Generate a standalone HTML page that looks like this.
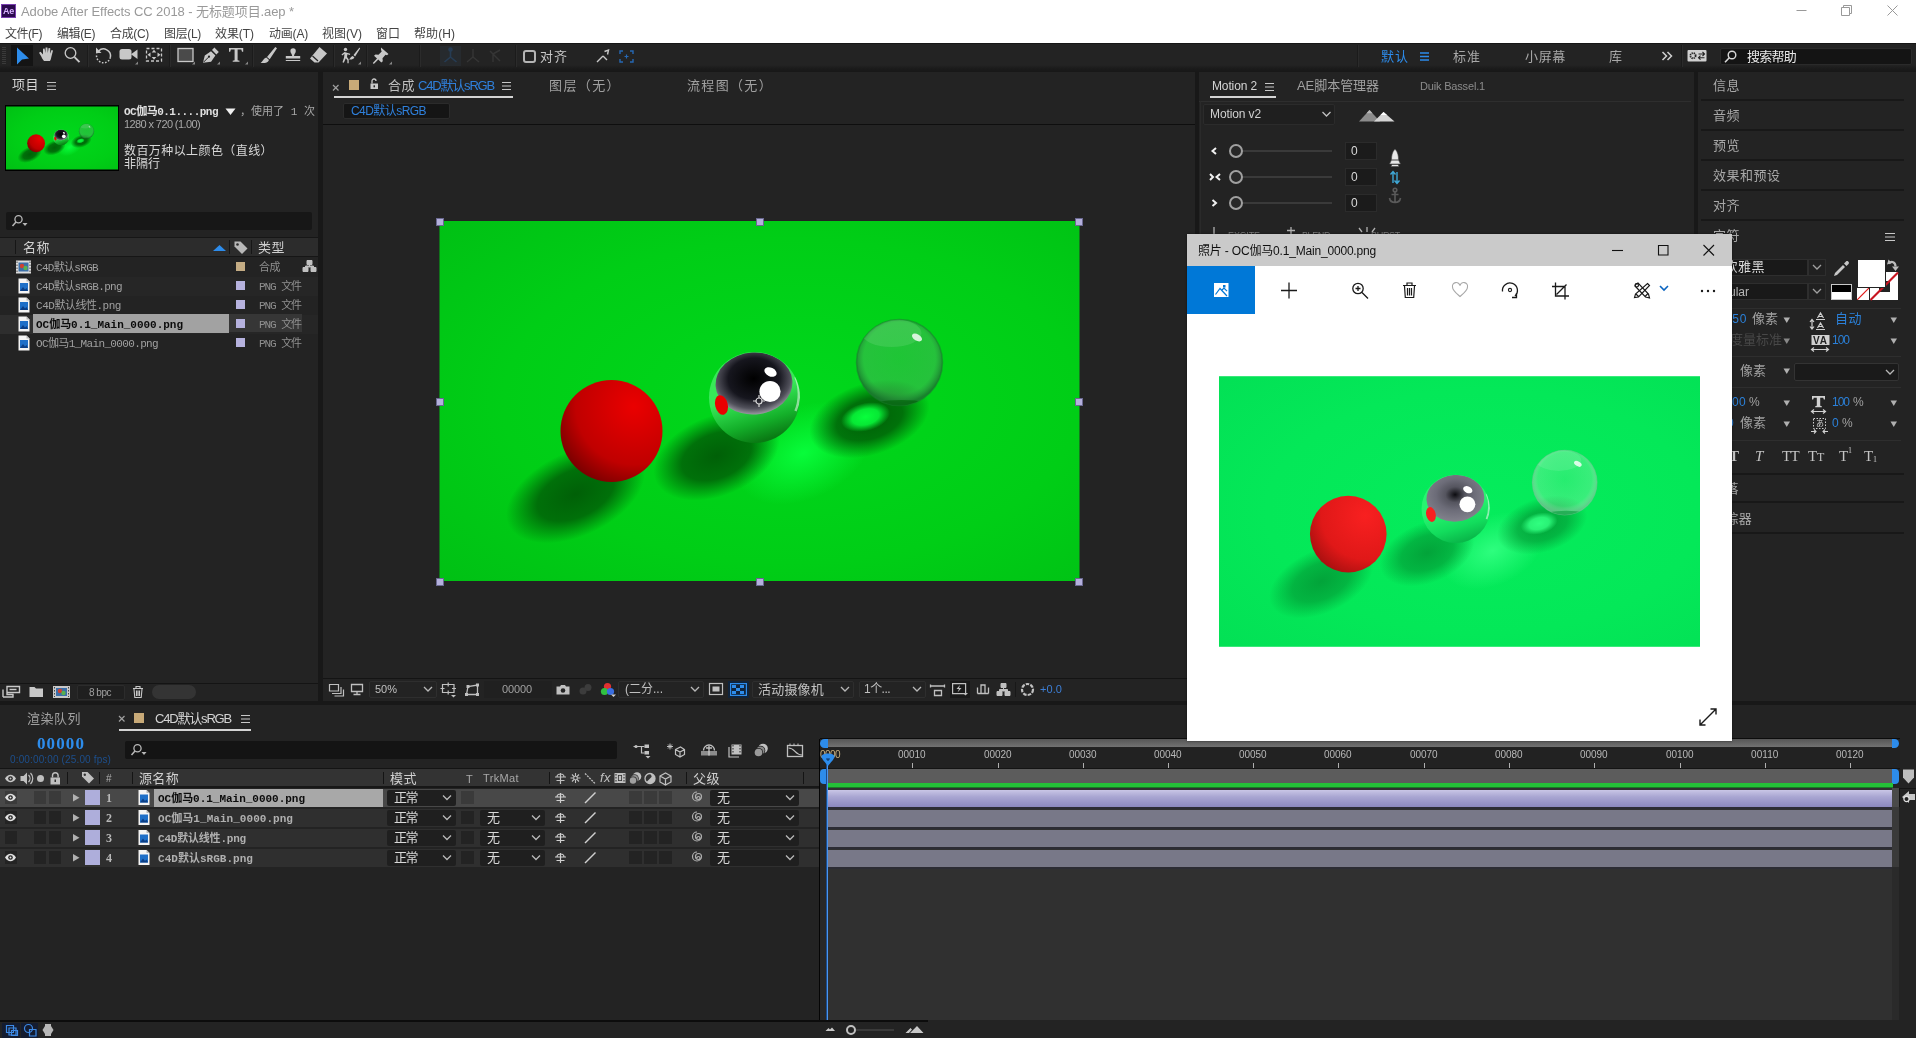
<!DOCTYPE html><html lang="zh"><head><meta charset="utf-8"><title>Adobe After Effects CC 2018</title><style>
html,body{margin:0;padding:0;background:#181818;}
body{width:1916px;height:1038px;overflow:hidden;position:relative;font-family:"Liberation Sans","Noto Sans CJK SC",sans-serif;}
#root{position:absolute;left:0;top:0;width:1916px;height:1038px;overflow:hidden;will-change:transform;}
#root div,#root span,#root svg{position:absolute;box-sizing:border-box;}
.t{white-space:pre;display:block;}
.m{font-family:"Liberation Mono","Noto Sans CJK SC",monospace;}
.s{font-family:"Liberation Serif","Noto Serif CJK SC",serif;}
.b{font-weight:bold;}
#t1{letter-spacing:-0.258px}#t2{letter-spacing:-0.085px}#t3{letter-spacing:-0.466px}#t4{letter-spacing:-0.4px}#t5{letter-spacing:-0.334px}#t6{letter-spacing:-0.334px}#t7{letter-spacing:-0.066px}#t8{letter-spacing:-0.2px}#t10{letter-spacing:-0.008px}#t11{letter-spacing:0.066px}#t12{letter-spacing:0.992px}#t13{letter-spacing:0.992px}#t14{letter-spacing:0.992px}#t15{letter-spacing:0.661px}#t16{letter-spacing:0.984px}#t17{letter-spacing:-0.754px}#t18{letter-spacing:0.492px}#t19{letter-spacing:-0.516px}#t20{letter-spacing:0.023px}#t21{letter-spacing:-0.602px}#t22{letter-spacing:0.415px}#t23{letter-spacing:-0.005px}#t24{letter-spacing:0.492px}#t25{letter-spacing:0.492px}#t26{letter-spacing:-0.691px}#t27{letter-spacing:-0.5px}#t28{letter-spacing:-0.663px}#t29{letter-spacing:-1.068px}#t30{letter-spacing:-0.474px}#t31{letter-spacing:-1.068px}#t32{letter-spacing:-0.02px}#t33{letter-spacing:-1.068px}#t34{letter-spacing:-0.643px}#t35{letter-spacing:-1.068px}#t36{letter-spacing:-0.494px}#t37{letter-spacing:0.492px}#t38{letter-spacing:-1.188px}#t39{letter-spacing:1.397px}#t40{letter-spacing:1.331px}#t41{letter-spacing:-0.557px}#t42{letter-spacing:-0.01px}#t43{letter-spacing:-0.119px}#t45{letter-spacing:0.197px}#t46{letter-spacing:-0.537px}#t47{letter-spacing:0.07px}#t48{letter-spacing:-0.129px}#t49{letter-spacing:-0.049px}#t50{letter-spacing:-0.174px}#t51{letter-spacing:-0.115px}#t52{letter-spacing:-0.688px}#t53{letter-spacing:-0.688px}#t54{letter-spacing:-0.688px}#t55{letter-spacing:-0.086px}#t56{letter-spacing:-0.403px}#t57{letter-spacing:-0.303px}#t58{letter-spacing:0.492px}#t59{letter-spacing:0.492px}#t60{letter-spacing:0.492px}#t61{letter-spacing:0.497px}#t62{letter-spacing:0.492px}#t63{letter-spacing:0.492px}#t64{letter-spacing:0.496px}#t66{letter-spacing:0.656px}#t67{letter-spacing:-0.008px}#t68{letter-spacing:0.492px}#t70{letter-spacing:-1.01px}#t71{letter-spacing:-0.008px}#t72{letter-spacing:0.323px}#t73{letter-spacing:-1.672px}#t74{letter-spacing:-1.01px}#t75{letter-spacing:-1.672px}#t76{letter-spacing:0.312px}#t77{letter-spacing:-0.008px}#t78{letter-spacing:-0.688px}#t79{letter-spacing:-1.672px}#t80{letter-spacing:0.922px}#t82{letter-spacing:0.984px}#t83{letter-spacing:1.656px}#t84{letter-spacing:-0.664px}#t85{letter-spacing:-0.172px}#t86{letter-spacing:0.656px}#t87{letter-spacing:-0.172px}#t89{letter-spacing:-0.172px}#t91{letter-spacing:0.492px}#t92{letter-spacing:0.328px}#t93{letter-spacing:0.496px}#t94{letter-spacing:-1.188px}#t95{letter-spacing:1.1px}#t96{letter-spacing:0.143px}#t97{letter-spacing:0.328px}#t98{letter-spacing:0.438px}#t99{letter-spacing:0.492px}#t100{letter-spacing:-0.734px}#t101{letter-spacing:0.365px}#t102{letter-spacing:0.438px}#t103{letter-spacing:0.492px}#t105{letter-spacing:-0.02px}#t106{letter-spacing:-1.508px}#t107{letter-spacing:-1.016px}#t109{letter-spacing:0.041px}#t110{letter-spacing:-1.508px}#t111{letter-spacing:-1.016px}#t112{letter-spacing:-1.016px}#t114{letter-spacing:-0.202px}#t115{letter-spacing:-1.508px}#t116{letter-spacing:-1.016px}#t117{letter-spacing:-1.016px}#t119{letter-spacing:0.029px}#t120{letter-spacing:-1.508px}#t121{letter-spacing:-1.016px}#t122{letter-spacing:-1.016px}#t123{letter-spacing:-0.062px}#t124{letter-spacing:-0.062px}#t125{letter-spacing:-0.062px}#t126{letter-spacing:-0.062px}#t127{letter-spacing:-0.062px}#t128{letter-spacing:-0.062px}#t129{letter-spacing:-0.062px}#t130{letter-spacing:-0.062px}#t131{letter-spacing:-0.062px}#t132{letter-spacing:-0.062px}#t133{letter-spacing:0.084px}#t134{letter-spacing:-0.062px}#t135{letter-spacing:-0.562px}#t136{letter-spacing:-0.183px}</style></head><body><div id="root">
<div style="left:0px;top:0px;width:1916px;height:43px;background:#fff;"></div><div style="left:1px;top:4px;width:15px;height:14px;background:#2b0a4d;border:1px solid #7a3fb0;"></div><span id="t1" class="t " style="left:3px;top:5px;font-size:9px;line-height:12px;color:#d9b3ff;font-weight:bold;">Ae</span><span id="t2" class="t " style="left:21px;top:3px;font-size:13px;line-height:17px;color:#999;">Adobe After Effects CC 2018 - 无标题项目.aep *</span><svg style="left:1790px;top:0px;" width="120" height="22" viewBox="0 0 120 22"><g stroke="#999" stroke-width="1" fill="none"><path d="M6.5 10.5h10"/><path d="M51.5 7.5h8v8h-8zM53.5 7.5v-2h8v8h-2"/><path d="M97.5 5.5l10 10M107.5 5.5l-10 10"/></g></svg><span id="t3" class="t " style="left:5px;top:26px;font-size:12px;line-height:17px;color:#444;">文件(F)</span><span id="t4" class="t " style="left:57px;top:26px;font-size:12px;line-height:17px;color:#444;">编辑(E)</span><span id="t5" class="t " style="left:110px;top:26px;font-size:12px;line-height:17px;color:#444;">合成(C)</span><span id="t6" class="t " style="left:164px;top:26px;font-size:12px;line-height:17px;color:#444;">图层(L)</span><span id="t7" class="t " style="left:215px;top:26px;font-size:12px;line-height:17px;color:#444;">效果(T)</span><span id="t8" class="t " style="left:269px;top:26px;font-size:12px;line-height:17px;color:#444;">动画(A)</span><span id="t9" class="t " style="left:322px;top:26px;font-size:12px;line-height:17px;color:#444;">视图(V)</span><span id="t10" class="t " style="left:376px;top:26px;font-size:12px;line-height:17px;color:#444;">窗口</span><span id="t11" class="t " style="left:414px;top:26px;font-size:12px;line-height:17px;color:#444;">帮助(H)</span><div style="left:0px;top:43px;width:1916px;height:29px;background:linear-gradient(#232323 0,#232323 22px,#1a1a1a 26px,#181818 29px);"></div><div style="left:0px;top:43px;width:1916px;height:1px;background:#161616;"></div><div style="left:2px;top:47px;width:4px;height:18px;background:repeating-linear-gradient(#3a3a3a 0,#3a3a3a 1px,transparent 1px,transparent 2px);"></div><div style="left:11px;top:45px;width:22px;height:21px;background:#141414;"></div><svg style="left:0px;top:0px;" width="640" height="72" viewBox="0 0 640 72"><path d="M17 47.500l12 11-7 1-5 5z" fill="#2d8ceb"/><path d="M41 56l-2-3.2 1.6-1 2.4 2.6v-5.6l1.6-.2.8 4.4.2-5.6 1.8 0 .4 5.6 .8-5 1.7.3-.3 5.4 1.5-3.8 1.5.6-1.6 6.2c-.3 1.8-.8 3.2-1.4 4.2h-6c-1.2-1.4-2.2-3-3-4.900z" fill="#c8c8c8"/><circle cx="70.5" cy="53" r="5.3" fill="none" stroke="#c8c8c8" stroke-width="1.3"/><path d="M74.5 57.2l5 5" stroke="#c8c8c8" stroke-width="1.9"/><path d="M98.6 51A7 7 0 0 1 110.4 57.2" fill="none" stroke="#c8c8c8" stroke-width="1.5"/><path d="M110.4 57.2A7 7 0 1 1 96.9 53.6" fill="none" stroke="#c8c8c8" stroke-width="1.5" stroke-dasharray="1.6 1.6"/><path d="M96 47.5v5.5h5.5z" fill="#c8c8c8"/><rect x="119.500" y="49" width="12" height="10.500" rx="2.500" fill="#c8c8c8"/><path d="M131 54.2l6.500-4.700v9.500z" fill="#c8c8c8"/><path d="M138 61.500v3h-3z" fill="#888"/><rect x="146.5" y="48.5" width="15" height="12.5" fill="none" stroke="#c8c8c8" stroke-width="1.3" stroke-dasharray="3 2"/><path d="M147.500 54.800l3-2.300v4.600zM160.500 54.800l-3-2.300v4.600zM154 49.800l-2.300 2.700h4.600zM154 59.800l-2.300-2.700h4.600z" fill="#c8c8c8"/><rect x="178" y="48.500" width="15" height="13" fill="#4a4a4a" stroke="#c8c8c8" stroke-width="1.300"/><path d="M195 61.500v3h-3z" fill="#888"/><path d="M203 62.700l1.800-7.200 6.200-4.300 4.400 4.400-4.300 6.200zM212 50l2.400-2.400 4.400 4.400-2.400 2.400z" fill="#c8c8c8"/><path d="M203.500 62.200l5-5" stroke="#232323" stroke-width="1"/><circle cx="209" cy="56.700" r="1.100" fill="#232323"/><path d="M220 61.500v3h-3z" fill="#888"/><path d="M229 48h14.200v3.800h-1.200l-.7-2.200h-3.700v10.600l1.900.5v1.100h-6.800v-1.100l1.900-.5v-10.600h-3.700l-.7 2.200h-1.200z" fill="#c8c8c8"/><path d="M248 61.500v3h-3z" fill="#888"/><path d="M275.300 47l1.700 1.200-7.300 11-2.700-2.200zM266.300 57.600l2.700 2.300c-1 2.600-4.500 3.600-8.400 3 2.400-1.600 2.700-4.400 5.700-5.300z" fill="#c8c8c8"/><path d="M292.200 56c0-2.200-1.800-2.600-1.800-5a2.700 2.700 0 0 1 5.400 0c0 2.400-1.800 2.800-1.800 5h6.200v2.600h-14.400v-2.600zM285.800 60h14.400v1.100h-14.400z" fill="#c8c8c8"/><path d="M319.500 47l7.500 6.500-8.500 9h-4l-4.500-4z" fill="#c8c8c8"/><path d="M312.500 56l5.500 5" stroke="#232323" stroke-width="1.200"/><circle cx="345.500" cy="49.500" r="1.700" fill="#c8c8c8"/><path d="M344.500 52l-3 2.500.7.900 2.300-1.600-.500 4-1.500 4.500 1.300.400 2-4.500 1.600 2v3h1.300v-3.600l-1.700-2.700.4-2.600 2.600.6.2-1.200z" fill="#c8c8c8"/><path d="M359.500 47.500l-6 7.500 1.600 1.400 5-7.900zM352.800 56c-1.800.4-2 1.800-3.800 3.500 2.500.4 4.500-.400 5.400-2z" fill="#c8c8c8"/><path d="M361 61.500v3h-3z" fill="#888"/><path d="M381 47.500l7.500 6.500-1.500 1.200-1.500-.5-3 3.500.3 3-1.500 1.200-3-2.800-4.500 4.300-1-.9 4.200-4.500-3-2.700 1.500-1.300 3 .2 3.200-3.200-.7-1.700z" fill="#c8c8c8"/><path d="M392 61.500v3h-3z" fill="#888"/></svg><div style="left:87px;top:45px;width:1px;height:22px;background:#1b1b1b;"></div><div style="left:88px;top:45px;width:1px;height:22px;background:#2b2b2b;"></div><div style="left:169px;top:45px;width:1px;height:22px;background:#1b1b1b;"></div><div style="left:170px;top:45px;width:1px;height:22px;background:#2b2b2b;"></div><div style="left:252px;top:45px;width:1px;height:22px;background:#1b1b1b;"></div><div style="left:253px;top:45px;width:1px;height:22px;background:#2b2b2b;"></div><div style="left:333px;top:45px;width:1px;height:22px;background:#1b1b1b;"></div><div style="left:334px;top:45px;width:1px;height:22px;background:#2b2b2b;"></div><div style="left:366px;top:45px;width:1px;height:22px;background:#1b1b1b;"></div><div style="left:367px;top:45px;width:1px;height:22px;background:#2b2b2b;"></div><div style="left:419px;top:45px;width:1px;height:22px;background:#1b1b1b;"></div><div style="left:420px;top:45px;width:1px;height:22px;background:#2b2b2b;"></div><div style="left:515px;top:45px;width:1px;height:22px;background:#1b1b1b;"></div><div style="left:516px;top:45px;width:1px;height:22px;background:#2b2b2b;"></div><div style="left:1357px;top:45px;width:1px;height:22px;background:#1b1b1b;"></div><div style="left:1358px;top:45px;width:1px;height:22px;background:#2b2b2b;"></div><div style="left:1681px;top:45px;width:1px;height:22px;background:#1b1b1b;"></div><div style="left:1682px;top:45px;width:1px;height:22px;background:#2b2b2b;"></div><div style="left:440px;top:46px;width:21px;height:20px;background:#262a2e;"></div><svg style="left:440px;top:46px;" width="70" height="20" viewBox="0 0 70 20"><g stroke="#263c54" stroke-width="1.600" fill="none"><path d="M10.500 3v8l-6 5M10.500 11l6 5"/><circle cx="10.500" cy="3.500" r="1.500" fill="#263c54"/></g><g stroke="#353535" stroke-width="1.500" fill="none"><path d="M33 3v8l-6 5M33 11l6 5"/><path d="M50 5l10 10M60 4l-7 4v8"/></g></svg><div style="left:523px;top:50px;width:13px;height:13px;background:transparent;border:2px solid #b4b4b4;border-radius:3px;"></div><span id="t12" class="t " style="left:540px;top:48px;font-size:13px;line-height:17px;color:#c8c8c8;">对齐</span><svg style="left:594px;top:46px;" width="44" height="20" viewBox="0 0 44 20"><g stroke="#c8c8c8" stroke-width="1.400" fill="none"><path d="M3 16l6-6M9 10l4 4M10.500 5.500l4-1.500-1 4.500"/></g><g stroke="#2668b4" stroke-width="1.400" fill="none"><path d="M26 8v-3h3M36 5h3v3M39 13v3h-3M29 16h-3v-3"/><path d="M30.500 10.500h4M32.500 8.500v4" stroke-width="1.200"/></g></svg><span id="t13" class="t " style="left:1381px;top:48px;font-size:13px;line-height:17px;color:#2d8ceb;">默认</span><svg style="left:1419px;top:51px;" width="12" height="11" viewBox="0 0 12 11"><path d="M1 2h9M1 5.500h9M1 9h9" stroke="#2d8ceb" stroke-width="1.300"/></svg><span id="t14" class="t " style="left:1453px;top:48px;font-size:13px;line-height:17px;color:#a8a8a8;">标准</span><span id="t15" class="t " style="left:1525px;top:48px;font-size:13px;line-height:17px;color:#a8a8a8;">小屏幕</span><span id="t16" class="t " style="left:1609px;top:48px;font-size:13px;line-height:17px;color:#a8a8a8;">库</span><svg style="left:1661px;top:50px;" width="12" height="12" viewBox="0 0 12 12"><path d="M1.500 2l4 4-4 4M6.500 2l4 4-4 4" stroke="#d0d0d0" stroke-width="1.500" fill="none"/></svg><svg style="left:1687px;top:49px;" width="20" height="14" viewBox="0 0 20 14"><rect x=".5" y="1" width="19" height="11.500" rx="1" fill="#d0d0d0"/><circle cx="6" cy="6.700" r="2.600" fill="none" stroke="#232323" stroke-width="1.800" stroke-dasharray="1.300 0.800"/><path d="M11.500 5h6M15.500 3l2 2-2 2M17.500 8.700h-6M13.500 6.700l-2 2 2 2" stroke="#232323" stroke-width="1.100" fill="none"/></svg><div style="left:1720px;top:48px;width:192px;height:17px;background:#141414;border:1px solid #2a2a2a;border-radius:2px;"></div><svg style="left:1723px;top:50px;" width="16" height="14" viewBox="0 0 16 14"><circle cx="9" cy="5" r="3.800" fill="none" stroke="#d8d8d8" stroke-width="1.400"/><path d="M6.300 7.800l-4.300 4.400" stroke="#d8d8d8" stroke-width="1.600"/></svg><span id="t17" class="t " style="left:1747px;top:48px;font-size:13px;line-height:17px;color:#e8e8e8;">搜索帮助</span><div style="left:0px;top:72px;width:318px;height:629px;background:#232323;"></div><span id="t18" class="t " style="left:12px;top:76px;font-size:13px;line-height:17px;color:#d8d8d8;">项目</span><svg style="left:47px;top:81px;" width="10" height="10" viewBox="0 0 10 10"><path d="M0 1.500h9M0 5h9M0 8.500h9" stroke="#c0c0c0" stroke-width="1.200"/></svg><div style="left:5px;top:105px;width:114px;height:66px;background:#000;"></div><svg style="left:6px;top:106px;" width="112" height="64" viewBox="0 0 640 360"><defs>
<radialGradient id="thbg" cx="0.55" cy="0.5" r="0.75"><stop offset="0" stop-color="#00d81c"/><stop offset="0.6" stop-color="#00ce16"/><stop offset="1" stop-color="#00c014"/></radialGradient>
<radialGradient id="thsh"><stop offset="0" stop-color="#006007" stop-opacity="1"/><stop offset="0.55" stop-color="#006007" stop-opacity="0.85"/><stop offset="1" stop-color="#006007" stop-opacity="0"/></radialGradient>
<radialGradient id="thgl"><stop offset="0" stop-color="#08ff3c" stop-opacity="0.95"/><stop offset="1" stop-color="#08ff3c" stop-opacity="0"/></radialGradient>
<radialGradient id="thca"><stop offset="0" stop-color="#08ff3c" stop-opacity="1"/><stop offset="0.55" stop-color="#08ff3c" stop-opacity="0.85"/><stop offset="1" stop-color="#08ff3c" stop-opacity="0"/></radialGradient>
<radialGradient id="thred" cx="0.72" cy="0.26" r="0.95"><stop offset="0" stop-color="#ea0000"/><stop offset="0.6" stop-color="#c00000"/><stop offset="1" stop-color="#580000"/></radialGradient>
<linearGradient id="thchb" x1="0.2" y1="0" x2="0.5" y2="1"><stop offset="0.5" stop-color="#38e858"/><stop offset="0.8" stop-color="#14b02a"/><stop offset="1" stop-color="#0a7a14"/></linearGradient>
<radialGradient id="thcht" cx="0.5" cy="0.42" r="0.6"><stop offset="0" stop-color="#000000"/><stop offset="0.55" stop-color="#16161e"/><stop offset="0.8" stop-color="#50505a"/><stop offset="1" stop-color="#a8a8b0"/></radialGradient>
<radialGradient id="thgls" cx="0.5" cy="0.45" r="0.52"><stop offset="0" stop-color="#44b458" stop-opacity="0.45"/><stop offset="0.8" stop-color="#44b458" stop-opacity="0.55"/><stop offset="1" stop-color="#1c7a30" stop-opacity="0.9"/></radialGradient>
<clipPath id="thcc"><circle cx="315" cy="176.500" r="45.500"/></clipPath>
<clipPath id="thgc"><circle cx="460" cy="141.500" r="43"/></clipPath>
</defs>
<rect width="640" height="360" fill="url(#thbg)"/>
<ellipse cx="364" cy="232" rx="72" ry="46" fill="url(#thgl)" transform="rotate(-25 364 232)"/>
<ellipse cx="136" cy="273" rx="74" ry="42" fill="url(#thsh)" transform="rotate(-25 136 273)"/>
<ellipse cx="277" cy="235" rx="66" ry="40" fill="url(#thsh)" transform="rotate(-22 277 235)"/>
<ellipse cx="430" cy="198" rx="62" ry="36" fill="url(#thsh)" transform="rotate(-18 430 198)"/>
<ellipse cx="426" cy="196" rx="25" ry="14" fill="url(#thca)" transform="rotate(-14 426 196)"/>
<circle cx="172" cy="210" r="51" fill="url(#thred)"/>
<circle cx="315" cy="176.500" r="45.500" fill="url(#thchb)"/>
<g clip-path="url(#thcc)">
<ellipse cx="314.500" cy="162.500" rx="38.500" ry="31" fill="url(#thcht)" transform="rotate(-4 314.500 162.500)"/>
<ellipse cx="282" cy="184" rx="6.300" ry="10" fill="#ea0000" transform="rotate(-14 282 184)"/>
<circle cx="330.500" cy="170.500" r="10.600" fill="#fff"/>
<ellipse cx="331" cy="151" rx="6.500" ry="4.300" fill="#fff" transform="rotate(25 331 151)"/>
<path d="M356 156c4.500 10 4.500 24 0 34" fill="none" stroke="#fff" stroke-opacity="0.5" stroke-width="2.500"/>
</g>
<circle cx="460" cy="141.500" r="43" fill="url(#thgls)" stroke="#1c7a30" stroke-opacity="0.5" stroke-width="1.500"/>
<g clip-path="url(#thgc)"><ellipse cx="462" cy="186" rx="34" ry="7" fill="#006007" fill-opacity="0.6"/><ellipse cx="452" cy="112" rx="30" ry="14" fill="#fff" fill-opacity="0.1"/></g>
<ellipse cx="477.500" cy="116.500" rx="5.500" ry="3.200" fill="#fff" fill-opacity="0.8" transform="rotate(30 477.500 116.500)"/>
</svg><span id="t19" class="t m b" style="left:124px;top:105px;font-size:11px;line-height:14px;color:#e0e0e0;">OC伽马0.1....png</span><svg style="left:225px;top:108px;" width="11" height="8" viewBox="0 0 11 8"><path d="M.5 .5h10l-5 6.500z" fill="#f0f0f0"/></svg><span id="t20" class="t m" style="left:240px;top:105px;font-size:11px;line-height:14px;color:#a8a8a8;">，使用了 1 次</span><span id="t21" class="t " style="left:124px;top:117px;font-size:11px;line-height:14px;color:#a8a8a8;">1280 x 720 (1.00)</span><span id="t22" class="t " style="left:124px;top:144px;font-size:12px;line-height:15px;color:#d8d8d8;">数百万种以上颜色（直线）</span><span id="t23" class="t " style="left:124px;top:157px;font-size:12px;line-height:15px;color:#d8d8d8;">非隔行</span><div style="left:6px;top:212px;width:306px;height:18px;background:#171717;border-radius:2px;"></div><svg style="left:11px;top:214px;" width="20" height="14" viewBox="0 0 20 14"><circle cx="7.500" cy="5.200" r="3.600" fill="none" stroke="#b8b8b8" stroke-width="1.300"/><path d="M5 8l-3.500 4" stroke="#b8b8b8" stroke-width="1.500"/><path d="M11.500 9h5l-2.500 3z" fill="#b8b8b8"/></svg><div style="left:0px;top:237px;width:318px;height:20px;background:#2c2c2c;border-top:1px solid #161616;border-bottom:1px solid #161616;"></div><div style="left:15px;top:240px;width:1px;height:14px;background:#161616;"></div><div style="left:229px;top:240px;width:1px;height:14px;background:#161616;"></div><div style="left:251px;top:240px;width:1px;height:14px;background:#161616;"></div><span id="t24" class="t " style="left:23px;top:239px;font-size:13px;line-height:17px;color:#d0d0d0;">名称</span><svg style="left:213px;top:245px;" width="14" height="7" viewBox="0 0 14 7"><path d="M0 6l6.500-6 6.500 6z" fill="#2d8ceb"/></svg><svg style="left:233px;top:240px;" width="16" height="15" viewBox="0 0 16 15"><path d="M1.500 1.500h6l7 7-5.500 5.500-7.500-7.500z" fill="#b8b8b8"/><circle cx="4.500" cy="4.500" r="1.300" fill="#2c2c2c"/></svg><span id="t25" class="t " style="left:258px;top:239px;font-size:13px;line-height:17px;color:#d0d0d0;">类型</span><span id="t26" class="t m" style="left:36px;top:261px;font-size:11px;line-height:14px;color:#a0a0a0;">C4D默认sRGB</span><div style="left:236px;top:262px;width:9px;height:9px;background:#c4ac84;"></div><span id="t27" class="t m" style="left:259px;top:261px;font-size:11px;line-height:14px;color:#909090;">合成</span><div style="left:0px;top:277px;width:318px;height:19px;background:#262626;"></div><span id="t28" class="t m" style="left:36px;top:280px;font-size:11px;line-height:14px;color:#a0a0a0;">C4D默认sRGB.png</span><div style="left:236px;top:281px;width:9px;height:9px;background:#b6b2de;"></div><span id="t29" class="t m" style="left:259px;top:280px;font-size:11px;line-height:14px;color:#909090;">PNG 文件</span><span id="t30" class="t m" style="left:36px;top:299px;font-size:11px;line-height:14px;color:#a0a0a0;">C4D默认线性.png</span><div style="left:236px;top:300px;width:9px;height:9px;background:#b6b2de;"></div><span id="t31" class="t m" style="left:259px;top:299px;font-size:11px;line-height:14px;color:#909090;">PNG 文件</span><div style="left:0px;top:315px;width:318px;height:19px;background:#262626;"></div><div style="left:0px;top:315px;width:33px;height:19px;background:#2e2e2e;"></div><div style="left:33px;top:314px;width:196px;height:19px;background:#a2a2a2;"></div><div style="left:229px;top:314px;width:73px;height:18px;background:#363636;"></div><span id="t32" class="t m b" style="left:36px;top:318px;font-size:11px;line-height:14px;color:#0c0c0c;">OC伽马0.1_Main_0000.png</span><div style="left:236px;top:319px;width:9px;height:9px;background:#b6b2de;"></div><span id="t33" class="t m" style="left:259px;top:318px;font-size:11px;line-height:14px;color:#909090;">PNG 文件</span><span id="t34" class="t m" style="left:36px;top:337px;font-size:11px;line-height:14px;color:#a0a0a0;">OC伽马1_Main_0000.png</span><div style="left:236px;top:338px;width:9px;height:9px;background:#b6b2de;"></div><span id="t35" class="t m" style="left:259px;top:337px;font-size:11px;line-height:14px;color:#909090;">PNG 文件</span><svg style="left:0px;top:0px;" width="320" height="360" viewBox="0 0 320 360"><rect x="16" y="260.5" width="15" height="13" fill="#dcdcdc"/><rect x="18.500" y="262.5" width="10" height="9" fill="#3b6ea8"/><circle cx="22" cy="266" r="2.200" fill="#d04030"/><circle cx="25.500" cy="268" r="2.200" fill="#58b050"/><path d="M17 261.5v11M30 261.5v11" stroke="#444" stroke-width="1" stroke-dasharray="1.500 1.500"/><path d="M18.5 278.5h8l3 3v12h-11z" fill="#f4f4f4"/><path d="M26.5 278.5v3h3z" fill="#b8b8b8"/><rect x="20.0" y="283.0" width="8" height="8" fill="#1e6fc8"/><path d="M20.0 291.0l3-4 2 2.500 1.500-1.500 1.500 3z" fill="#0c3f86"/><path d="M18.5 297.5h8l3 3v12h-11z" fill="#f4f4f4"/><path d="M26.5 297.5v3h3z" fill="#b8b8b8"/><rect x="20.0" y="302.0" width="8" height="8" fill="#1e6fc8"/><path d="M20.0 310.0l3-4 2 2.500 1.500-1.500 1.500 3z" fill="#0c3f86"/><path d="M18.5 316.5h8l3 3v12h-11z" fill="#f4f4f4"/><path d="M26.5 316.5v3h3z" fill="#b8b8b8"/><rect x="20.0" y="321.0" width="8" height="8" fill="#1e6fc8"/><path d="M20.0 329.0l3-4 2 2.500 1.500-1.500 1.500 3z" fill="#0c3f86"/><path d="M18.5 335.5h8l3 3v12h-11z" fill="#f4f4f4"/><path d="M26.5 335.5v3h3z" fill="#b8b8b8"/><rect x="20.0" y="340.0" width="8" height="8" fill="#1e6fc8"/><path d="M20.0 348.0l3-4 2 2.500 1.500-1.500 1.500 3z" fill="#0c3f86"/><path d="M307 260.500h5v4h-5zM303 267.500h5v4h-5zM311 267.500h5v4h-5zM309.500 264.500v1.500M305.500 267.500v-1.500h8v1.500" fill="#c0c0c0" stroke="#c0c0c0" stroke-width="1"/></svg><div style="left:0px;top:683px;width:318px;height:18px;background:#232323;border-top:1px solid #141414;"></div><div style="left:318px;top:72px;width:5px;height:633px;background:#181818;"></div><svg style="left:0px;top:0px;pointer-events:none;" width="320" height="1038" viewBox="0 0 320 1038"><path d="M3 689.500v7.500M3 697h10v-2.500h-6v-2M7 686.500h12.500v6h-12.500zM9.500 689.500h7" fill="none" stroke="#c8c8c8" stroke-width="1.400"/><path d="M29.500 687h5l1.500 1.500h7v8.500h-13.500z" fill="#c8c8c8"/><rect x="53" y="686" width="17" height="12" fill="#c8c8c8"/><rect x="56" y="688" width="11" height="8" fill="#3b6ea8"/><circle cx="60" cy="691" r="2.200" fill="#d04030"/><circle cx="63.500" cy="693" r="2.200" fill="#58b050"/><path d="M54.500 687v10M68.500 687v10" stroke="#444" stroke-dasharray="1.500 1.500"/><path d="M133 688.500h10M136 688v-1.500h4v1.500M134 689l.8 8.500h6.400l.8-8.500M136.500 690.500v5.500M138 690.500v5.500M139.500 690.500v5.500" fill="none" stroke="#c8c8c8" stroke-width="1.100"/></svg><div style="left:77px;top:685px;width:48px;height:15px;background:#1f1f1f;border:1px solid #2c2c2c;border-radius:2px;"></div><span id="t36" class="t " style="left:89px;top:686px;font-size:10px;line-height:13px;color:#a0a0a0;">8 bpc</span><div style="left:152px;top:685px;width:44px;height:14px;background:#343434;border-radius:7px;"></div><div style="left:323px;top:72px;width:872px;height:629px;background:#232323;"></div><div style="left:1195px;top:72px;width:4px;height:633px;background:#181818;"></div><svg style="left:332px;top:84px;" width="8" height="8" viewBox="0 0 8 8"><path d="M1 1l5.500 5.500M6.500 1l-5.500 5.500" stroke="#a0a0a0" stroke-width="1.200"/></svg><div style="left:349px;top:80px;width:10px;height:10px;background:#c8aa78;"></div><svg style="left:368px;top:78px;" width="12" height="12" viewBox="0 0 12 12"><path d="M2.500 5.500h7.500v5.500h-7.500z" fill="#c8c8c8"/><path d="M4 5.500v-2.500a2 2 0 0 1 4 0" fill="none" stroke="#c8c8c8" stroke-width="1.300"/><rect x="5.500" y="7.300" width="1.500" height="2" fill="#232323"/></svg><span id="t37" class="t " style="left:388px;top:77px;font-size:13px;line-height:17px;color:#c0c0c0;">合成</span><span id="t38" class="t " style="left:418px;top:77px;font-size:13px;line-height:17px;color:#2f80dc;">C4D默认sRGB</span><svg style="left:502px;top:81px;" width="10" height="10" viewBox="0 0 10 10"><path d="M0 1.500h9M0 5h9M0 8.500h9" stroke="#c8c8c8" stroke-width="1.200"/></svg><div style="left:334px;top:96px;width:179px;height:2px;background:#d4d4d4;"></div><span id="t39" class="t " style="left:549px;top:77px;font-size:13px;line-height:17px;color:#a0a0a0;">图层（无）</span><span id="t40" class="t " style="left:687px;top:77px;font-size:13px;line-height:17px;color:#a0a0a0;">流程图（无）</span><div style="left:343px;top:103px;width:107px;height:16px;background:#151515;border:1px solid #2b2b2b;border-radius:2px;"></div><span id="t41" class="t " style="left:351px;top:103px;font-size:12px;line-height:16px;color:#2f80dc;">C4D默认sRGB</span><div style="left:323px;top:124px;width:872px;height:1px;background:#0e0e0e;"></div><svg style="left:439px;top:221px;" width="641" height="360" viewBox="0 0 640 360"><defs>
<radialGradient id="cpbg" cx="0.55" cy="0.5" r="0.75"><stop offset="0" stop-color="#00d81c"/><stop offset="0.6" stop-color="#00ce16"/><stop offset="1" stop-color="#00c014"/></radialGradient>
<radialGradient id="cpsh"><stop offset="0" stop-color="#006007" stop-opacity="1"/><stop offset="0.55" stop-color="#006007" stop-opacity="0.85"/><stop offset="1" stop-color="#006007" stop-opacity="0"/></radialGradient>
<radialGradient id="cpgl"><stop offset="0" stop-color="#08ff3c" stop-opacity="0.95"/><stop offset="1" stop-color="#08ff3c" stop-opacity="0"/></radialGradient>
<radialGradient id="cpca"><stop offset="0" stop-color="#08ff3c" stop-opacity="1"/><stop offset="0.55" stop-color="#08ff3c" stop-opacity="0.85"/><stop offset="1" stop-color="#08ff3c" stop-opacity="0"/></radialGradient>
<radialGradient id="cpred" cx="0.72" cy="0.26" r="0.95"><stop offset="0" stop-color="#ea0000"/><stop offset="0.6" stop-color="#c00000"/><stop offset="1" stop-color="#580000"/></radialGradient>
<linearGradient id="cpchb" x1="0.2" y1="0" x2="0.5" y2="1"><stop offset="0.5" stop-color="#38e858"/><stop offset="0.8" stop-color="#14b02a"/><stop offset="1" stop-color="#0a7a14"/></linearGradient>
<radialGradient id="cpcht" cx="0.5" cy="0.42" r="0.6"><stop offset="0" stop-color="#000000"/><stop offset="0.55" stop-color="#16161e"/><stop offset="0.8" stop-color="#50505a"/><stop offset="1" stop-color="#a8a8b0"/></radialGradient>
<radialGradient id="cpgls" cx="0.5" cy="0.45" r="0.52"><stop offset="0" stop-color="#44b458" stop-opacity="0.45"/><stop offset="0.8" stop-color="#44b458" stop-opacity="0.55"/><stop offset="1" stop-color="#1c7a30" stop-opacity="0.9"/></radialGradient>
<clipPath id="cpcc"><circle cx="315" cy="176.500" r="45.500"/></clipPath>
<clipPath id="cpgc"><circle cx="460" cy="141.500" r="43"/></clipPath>
</defs>
<rect width="640" height="360" fill="url(#cpbg)"/>
<ellipse cx="364" cy="232" rx="72" ry="46" fill="url(#cpgl)" transform="rotate(-25 364 232)"/>
<ellipse cx="136" cy="273" rx="74" ry="42" fill="url(#cpsh)" transform="rotate(-25 136 273)"/>
<ellipse cx="277" cy="235" rx="66" ry="40" fill="url(#cpsh)" transform="rotate(-22 277 235)"/>
<ellipse cx="430" cy="198" rx="62" ry="36" fill="url(#cpsh)" transform="rotate(-18 430 198)"/>
<ellipse cx="426" cy="196" rx="25" ry="14" fill="url(#cpca)" transform="rotate(-14 426 196)"/>
<circle cx="172" cy="210" r="51" fill="url(#cpred)"/>
<circle cx="315" cy="176.500" r="45.500" fill="url(#cpchb)"/>
<g clip-path="url(#cpcc)">
<ellipse cx="314.500" cy="162.500" rx="38.500" ry="31" fill="url(#cpcht)" transform="rotate(-4 314.500 162.500)"/>
<ellipse cx="282" cy="184" rx="6.300" ry="10" fill="#ea0000" transform="rotate(-14 282 184)"/>
<circle cx="330.500" cy="170.500" r="10.600" fill="#fff"/>
<ellipse cx="331" cy="151" rx="6.500" ry="4.300" fill="#fff" transform="rotate(25 331 151)"/>
<path d="M356 156c4.500 10 4.500 24 0 34" fill="none" stroke="#fff" stroke-opacity="0.5" stroke-width="2.500"/>
</g>
<circle cx="460" cy="141.500" r="43" fill="url(#cpgls)" stroke="#1c7a30" stroke-opacity="0.5" stroke-width="1.500"/>
<g clip-path="url(#cpgc)"><ellipse cx="462" cy="186" rx="34" ry="7" fill="#006007" fill-opacity="0.6"/><ellipse cx="452" cy="112" rx="30" ry="14" fill="#fff" fill-opacity="0.1"/></g>
<ellipse cx="477.500" cy="116.500" rx="5.500" ry="3.200" fill="#fff" fill-opacity="0.8" transform="rotate(30 477.500 116.500)"/>
</svg><div style="left:436px;top:218px;width:8px;height:8px;background:#b4b0dc;border:1px solid #6a6890;"></div><div style="left:436px;top:398px;width:8px;height:8px;background:#b4b0dc;border:1px solid #6a6890;"></div><div style="left:436px;top:578px;width:8px;height:8px;background:#b4b0dc;border:1px solid #6a6890;"></div><div style="left:756px;top:218px;width:8px;height:8px;background:#b4b0dc;border:1px solid #6a6890;"></div><div style="left:756px;top:578px;width:8px;height:8px;background:#b4b0dc;border:1px solid #6a6890;"></div><div style="left:1075px;top:218px;width:8px;height:8px;background:#b4b0dc;border:1px solid #6a6890;"></div><div style="left:1075px;top:398px;width:8px;height:8px;background:#b4b0dc;border:1px solid #6a6890;"></div><div style="left:1075px;top:578px;width:8px;height:8px;background:#b4b0dc;border:1px solid #6a6890;"></div><svg style="left:752px;top:394px;" width="14" height="14" viewBox="0 0 14 14"><g stroke="#d8d8d8" stroke-width="1.200" fill="none"><circle cx="7" cy="7" r="3"/><path d="M7 1v3M7 10v3M1 7h3M10 7h3"/></g></svg><div style="left:323px;top:678px;width:872px;height:23px;background:#232323;border-top:1px solid #141414;"></div><svg style="left:0px;top:0px;pointer-events:none;" width="1200" height="1038" viewBox="0 0 1200 1038"><path d="M329.500 684.500h9v6.500h-9zM332 693.500h9v-6.500M334.500 696h9v-6.500" fill="none" stroke="#c0c0c0" stroke-width="1.200"/><path d="M351.500 684.500h11v7h-11zM357 691.500v2.500M353.500 694.500h7" fill="none" stroke="#c0c0c0" stroke-width="1.300"/><path d="M442.500 684.500h11.500v8h-11.500zM448.200 682.500v4M448.200 690.500v4M440.500 688.500h4M452 688.500h4" fill="none" stroke="#c0c0c0" stroke-width="1.200"/><path d="M451 695h5l-2.500 2.500z" fill="#c0c0c0"/><path d="M466.500 694.500l1.500-8 9.500-1.500v9.500z" fill="none" stroke="#c0c0c0" stroke-width="1.300"/><rect x="465" y="693" width="3" height="3" fill="#c0c0c0"/><rect x="466.500" y="685" width="3" height="3" fill="#c0c0c0"/><rect x="476" y="683.500" width="3" height="3" fill="#c0c0c0"/><rect x="476" y="693" width="3" height="3" fill="#c0c0c0"/><path d="M556.500 686.500h3.500l1-1.500h4l1 1.500h3.500v8h-13z" fill="#c0c0c0"/><circle cx="563" cy="690.500" r="2.300" fill="#232323"/><circle cx="583" cy="691" r="3.500" fill="#3c3c3c"/><circle cx="588" cy="687.500" r="3.500" fill="#3c3c3c"/><circle cx="607.500" cy="686.500" r="3.600" fill="#e03030"/><circle cx="604.500" cy="691.500" r="3.600" fill="#30c040"/><circle cx="610.500" cy="691.500" r="3.600" fill="#3a6ee0"/><path d="M611 694.500h5l-2.500 2.500z" fill="#d0d0d0"/><rect x="709.500" y="683.500" width="13" height="11" fill="none" stroke="#c0c0c0" stroke-width="1.200"/><rect x="712.500" y="686.500" width="7" height="5" fill="#c0c0c0"/><path d="M930.500 684.500v3M944.500 684.500v3M930.500 686h14M934.500 690.500h7v5h-7z" fill="none" stroke="#c0c0c0" stroke-width="1.300"/><path d="M977.500 693.500v-6M988.500 693.500v-6M977.500 693.500h11M981 693v-8h4v8" fill="none" stroke="#c0c0c0" stroke-width="1.300"/><path d="M1001 683.500h5v4h-5zM997 691.500h5v4h-5zM1005 691.500h5v4h-5zM1003.500 687.500v2M999.500 691.500v-2h8v2" fill="#c0c0c0" stroke="#c0c0c0" stroke-width="1"/><circle cx="1027.500" cy="689.500" r="5.500" fill="none" stroke="#c0c0c0" stroke-width="2.200" stroke-dasharray="3.500 1.200"/><path d="M424 687l4 4 4-4" fill="none" stroke="#b8b8b8" stroke-width="1.300"/><path d="M691 687l4 4 4-4" fill="none" stroke="#b8b8b8" stroke-width="1.300"/><path d="M841 687l4 4 4-4" fill="none" stroke="#b8b8b8" stroke-width="1.300"/><path d="M913 687l4 4 4-4" fill="none" stroke="#b8b8b8" stroke-width="1.300"/></svg><div style="left:369px;top:681px;width:68px;height:17px;background:transparent;border:1px solid #2e2e2e;border-radius:2px;"></div><span id="t42" class="t " style="left:375px;top:682px;font-size:11px;line-height:15px;color:#c0c0c0;">50%</span><div style="left:484px;top:681px;width:68px;height:17px;background:#202020;"></div><span id="t43" class="t " style="left:502px;top:682px;font-size:11px;line-height:15px;color:#a0a0a0;">00000</span><div style="left:618px;top:681px;width:86px;height:17px;background:transparent;border:1px solid #2e2e2e;border-radius:2px;"></div><span id="t44" class="t " style="left:625px;top:681px;font-size:12px;line-height:16px;color:#c0c0c0;">(二分...</span><div style="left:728px;top:681px;width:21px;height:17px;background:#10243c;"></div><svg style="left:730px;top:683px;" width="17" height="13" viewBox="0 0 17 13"><rect x=".6" y=".6" width="15.800" height="11.800" fill="none" stroke="#2d8ceb" stroke-width="1.200"/><path d="M2 2h4v3h-4zM10 2h4v3h-4zM6 5h4v3h-4zM2 8h4v3h-4zM10 8h4v3h-4z" fill="#2d8ceb"/></svg><div style="left:752px;top:681px;width:102px;height:17px;background:transparent;border:1px solid #2e2e2e;border-radius:2px;"></div><span id="t45" class="t " style="left:758px;top:681px;font-size:13px;line-height:17px;color:#c0c0c0;">活动摄像机</span><div style="left:859px;top:681px;width:67px;height:17px;background:transparent;border:1px solid #2e2e2e;border-radius:2px;"></div><span id="t46" class="t " style="left:864px;top:681px;font-size:12px;line-height:16px;color:#c0c0c0;">1个...</span><div style="left:950px;top:681px;width:20px;height:17px;background:#1a1a1a;"></div><svg style="left:952px;top:683px;" width="16" height="13" viewBox="0 0 16 13"><path d="M.600 .600h13v10h-13z" fill="none" stroke="#c0c0c0" stroke-width="1.200"/><path d="M8 2l-3.500 4h2.500l-1.500 3.500 4-4.500h-2.500z" fill="#c0c0c0"/><path d="M11 10h5l-2.500 2.500z" fill="#c0c0c0"/></svg><div style="left:1015px;top:682px;width:1px;height:15px;background:#181818;"></div><span id="t47" class="t " style="left:1040px;top:682px;font-size:11px;line-height:15px;color:#3d7fd6;">+0.0</span><div style="left:1199px;top:72px;width:495px;height:629px;background:#232323;"></div><div style="left:1694px;top:72px;width:4px;height:633px;background:#181818;"></div><span id="t48" class="t " style="left:1212px;top:78px;font-size:12px;line-height:16px;color:#d4d4d4;">Motion 2</span><svg style="left:1265px;top:82px;" width="10" height="10" viewBox="0 0 10 10"><path d="M0 1.500h9M0 5h9M0 8.500h9" stroke="#c8c8c8" stroke-width="1.200"/></svg><div style="left:1210px;top:96px;width:66px;height:2px;background:#d4d4d4;"></div><span id="t49" class="t " style="left:1297px;top:77px;font-size:13px;line-height:17px;color:#a0a0a0;">AE脚本管理器</span><span id="t50" class="t " style="left:1420px;top:79px;font-size:11px;line-height:15px;color:#8c8c8c;">Duik Bassel.1</span><div style="left:1199px;top:101px;width:492px;height:1px;background:#2e2e2e;"></div><div style="left:1200px;top:101px;width:1px;height:600px;background:#2a2a2a;"></div><div style="left:1203px;top:104px;width:132px;height:21px;background:#1f1f1f;border:1px solid #2b2b2b;border-radius:2px;"></div><span id="t51" class="t " style="left:1210px;top:106px;font-size:12px;line-height:16px;color:#d0d0d0;">Motion v2</span><svg style="left:1322px;top:111px;" width="10" height="7" viewBox="0 0 10 7"><path d="M.500 1l4 4 4-4" fill="none" stroke="#c0c0c0" stroke-width="1.300"/></svg><svg style="left:1358px;top:106px;" width="38" height="16" viewBox="0 0 38 16"><path d="M1 15.500l10.500-11.500 10.500 11.500z" fill="#8c8c8c"/><path d="M8.500 7.200l3-3.200 3 3.200z" fill="#b8b8b8"/><path d="M16 15.500l9.500-9.500 11 9.500z" fill="#d4d4d4"/><path d="M22.500 9l3-3 3.500 3z" fill="#fff"/></svg><div style="left:1242px;top:150px;width:90px;height:2px;background:#3a3a3a;"></div><div style="left:1229px;top:144px;width:14px;height:14px;background:#282828;border:2px solid #a0a0a0;border-radius:7px;"></div><div style="left:1345px;top:142px;width:32px;height:18px;background:#1b1b1b;border:1px solid #2b2b2b;"></div><span id="t52" class="t " style="left:1351px;top:143px;font-size:12px;line-height:16px;color:#d8d8d8;">0</span><div style="left:1242px;top:176px;width:90px;height:2px;background:#3a3a3a;"></div><div style="left:1229px;top:170px;width:14px;height:14px;background:#282828;border:2px solid #a0a0a0;border-radius:7px;"></div><div style="left:1345px;top:168px;width:32px;height:18px;background:#1b1b1b;border:1px solid #2b2b2b;"></div><span id="t53" class="t " style="left:1351px;top:169px;font-size:12px;line-height:16px;color:#d8d8d8;">0</span><div style="left:1242px;top:202px;width:90px;height:2px;background:#3a3a3a;"></div><div style="left:1229px;top:196px;width:14px;height:14px;background:#282828;border:2px solid #a0a0a0;border-radius:7px;"></div><div style="left:1345px;top:194px;width:32px;height:18px;background:#1b1b1b;border:1px solid #2b2b2b;"></div><span id="t54" class="t " style="left:1351px;top:195px;font-size:12px;line-height:16px;color:#d8d8d8;">0</span><svg style="left:1208px;top:140px;" width="14" height="70" viewBox="0 0 14 70"><g stroke="#f0f0f0" stroke-width="2" fill="none"><path d="M8 8l-3.500 3 3.500 3"/><path d="M2 34l3 3-3 3M12 34l-3.500 3 3.500 3"/><path d="M4.500 60l3.500 3-3.500 3"/></g></svg><svg style="left:1387px;top:148px;" width="16" height="58" viewBox="0 0 16 58"><path d="M8 1c3 3 3.500 7 3.500 11h-7c0-4 .500-8 3.500-11zM4.500 12l-2 4h11l-2-4zM5 16.500l-1 2h8l-1-2z" fill="#e8e8e8" stroke="#444" stroke-width=".600"/><path d="M6 35v-11M3.500 26.500l2.500-3 2.500 3M10 24v11M7.500 32.500l2.500 3 2.500-3" fill="none" stroke="#3fa9d8" stroke-width="1.400"/><g fill="none" stroke="#5a5a5a" stroke-width="1.600"><circle cx="8" cy="42" r="1.800"/><path d="M8 44v10M4.500 46.500h7M2.500 50c.5 3 2.500 4.500 5.500 4.500s5-1.500 5.500-4.500"/></g></svg><svg style="left:1205px;top:226px;" width="210" height="8" viewBox="0 0 210 8"><g stroke="#b0b0b0" stroke-width="1.300" fill="none"><path d="M9 1v7M86 1v7M82 4.500h8M154 2l3 4M162 1v5M170 2l-3 4"/></g></svg><span id="t55" class="t " style="left:1228px;top:230px;font-size:9px;line-height:10px;color:#7a7a7a;">EXCITE</span><span id="t56" class="t " style="left:1302px;top:230px;font-size:9px;line-height:10px;color:#7a7a7a;">BLEND</span><span id="t57" class="t " style="left:1371px;top:230px;font-size:9px;line-height:10px;color:#7a7a7a;">BURST</span><div style="left:1698px;top:72px;width:218px;height:629px;background:#232323;"></div><span id="t58" class="t " style="left:1713px;top:77px;font-size:13px;line-height:17px;color:#a8a8a8;">信息</span><div style="left:1701px;top:99px;width:203px;height:2px;background:#181818;"></div><span id="t59" class="t " style="left:1713px;top:107px;font-size:13px;line-height:17px;color:#a8a8a8;">音频</span><div style="left:1701px;top:129px;width:203px;height:2px;background:#181818;"></div><span id="t60" class="t " style="left:1713px;top:137px;font-size:13px;line-height:17px;color:#a8a8a8;">预览</span><div style="left:1701px;top:159px;width:203px;height:2px;background:#181818;"></div><span id="t61" class="t " style="left:1713px;top:167px;font-size:13px;line-height:17px;color:#a8a8a8;">效果和预设</span><div style="left:1701px;top:189px;width:203px;height:2px;background:#181818;"></div><span id="t62" class="t " style="left:1713px;top:197px;font-size:13px;line-height:17px;color:#a8a8a8;">对齐</span><div style="left:1701px;top:219px;width:203px;height:2px;background:#181818;"></div><span id="t63" class="t " style="left:1713px;top:227px;font-size:13px;line-height:17px;color:#a8a8a8;">字符</span><svg style="left:1885px;top:232px;" width="11" height="10" viewBox="0 0 11 10"><path d="M0 1.500h10M0 5h10M0 8.500h10" stroke="#c8c8c8" stroke-width="1.200"/></svg><div style="left:1720px;top:259px;width:88px;height:17px;background:#191919;border:1px solid #2e2e2e;"></div><span id="t64" class="t " style="left:1711px;top:258px;font-size:13px;line-height:18px;color:#d8d8d8;">微软雅黑</span><div style="left:1808px;top:259px;width:18px;height:17px;background:#202020;border:1px solid #2e2e2e;"></div><div style="left:1720px;top:283px;width:88px;height:17px;background:#191919;border:1px solid #2e2e2e;"></div><span id="t65" class="t " style="left:1707px;top:284px;font-size:12px;line-height:16px;color:#b8b8b8;">Regular</span><div style="left:1808px;top:283px;width:18px;height:17px;background:#202020;border:1px solid #2e2e2e;"></div><svg style="left:0px;top:0px;pointer-events:none;" width="1916" height="560" viewBox="0 0 1916 560"><path d="M1813 265l4 4 4-4" fill="none" stroke="#a0a0a0" stroke-width="1.300"/><path d="M1813 289l4 4 4-4" fill="none" stroke="#a0a0a0" stroke-width="1.300"/><path d="M1834 276l1-3 8-8 2 2-8 8zM1844 263.500l2-2c1.500-1.500 4 1 2.500 2.500l-2 2z" fill="#c8c8c8"/></svg><div style="left:1870px;top:272px;width:28px;height:28px;background:#fff;"></div><div style="left:1879px;top:281px;width:11px;height:11px;background:#232323;"></div><svg style="left:1868px;top:270px;" width="33" height="33" viewBox="0 0 33 33"><path d="M2.500 30l27.500-27.500" stroke="#c81420" stroke-width="2.200"/></svg><div style="left:1857px;top:259px;width:29px;height:29px;background:#fff;border:1px solid #232323;"></div><svg style="left:1886px;top:258px;" width="14" height="14" viewBox="0 0 14 14"><path d="M3 5.500c2.500-3 6.500-1.500 6.500 3" fill="none" stroke="#bcbcbc" stroke-width="2.200"/><path d="M1 6.500l1.500-5 3.500 3.500zM6 8.500h7l-3.500 4.500z" fill="#bcbcbc"/></svg><div style="left:1831px;top:284px;width:21px;height:16px;background:#fff;border:1px solid #c8c8c8;"></div><div style="left:1832px;top:285px;width:19px;height:7px;background:#000;"></div><div style="left:1857px;top:288px;width:12px;height:12px;background:#fff;"></div><svg style="left:1857px;top:288px;" width="12" height="12" viewBox="0 0 12 12"><path d="M0 12l12-12" stroke="#e01818" stroke-width="1.200"/></svg><div style="left:1720px;top:308px;width:181px;height:1px;background:#2e2e2e;"></div><div style="left:1720px;top:356px;width:181px;height:1px;background:#2e2e2e;"></div><div style="left:1720px;top:387px;width:181px;height:1px;background:#2e2e2e;"></div><div style="left:1720px;top:440px;width:181px;height:1px;background:#2e2e2e;"></div><span id="t66" class="t " style="left:1725px;top:311px;font-size:12px;line-height:16px;color:#2b80d8;">350</span><span id="t67" class="t " style="left:1752px;top:310px;font-size:13px;line-height:17px;color:#a0a0a0;">像素</span><span id="t68" class="t " style="left:1835px;top:310px;font-size:13px;line-height:17px;color:#2b80d8;">自动</span><span id="t69" class="t " style="left:1730px;top:331px;font-size:13px;line-height:17px;color:#484848;">度量标准</span><span id="t70" class="t " style="left:1832px;top:332px;font-size:12px;line-height:16px;color:#2b80d8;">100</span><span id="t71" class="t " style="left:1740px;top:362px;font-size:13px;line-height:17px;color:#a0a0a0;">像素</span><div style="left:1794px;top:363px;width:105px;height:18px;background:#1a1a1a;border:1px solid #333;border-radius:2px;"></div><span id="t72" class="t " style="left:1725px;top:394px;font-size:12px;line-height:16px;color:#2b80d8;">100</span><span id="t73" class="t " style="left:1749px;top:394px;font-size:12px;line-height:16px;color:#a0a0a0;">%</span><span id="t74" class="t " style="left:1832px;top:394px;font-size:12px;line-height:16px;color:#2b80d8;">100</span><span id="t75" class="t " style="left:1853px;top:394px;font-size:12px;line-height:16px;color:#a0a0a0;">%</span><span id="t76" class="t " style="left:1727px;top:415px;font-size:12px;line-height:16px;color:#2b80d8;">0</span><span id="t77" class="t " style="left:1740px;top:414px;font-size:13px;line-height:17px;color:#a0a0a0;">像素</span><span id="t78" class="t " style="left:1832px;top:415px;font-size:12px;line-height:16px;color:#2b80d8;">0</span><span id="t79" class="t " style="left:1842px;top:415px;font-size:12px;line-height:16px;color:#a0a0a0;">%</span><svg style="left:0px;top:0px;pointer-events:none;" width="1916" height="560" viewBox="0 0 1916 560"><path d="M1783.5 317.5h6.500l-3.250 5.500z" fill="#b0b0b0"/><path d="M1890.5 317.5h6.500l-3.250 5.500z" fill="#b0b0b0"/><path d="M1783.5 338.5h6.500l-3.250 5.500z" fill="#888"/><path d="M1890.5 338.5h6.500l-3.250 5.500z" fill="#b0b0b0"/><path d="M1783.5 368.5h6.500l-3.250 5.500z" fill="#b0b0b0"/><path d="M1783.5 400.5h6.500l-3.250 5.500z" fill="#b0b0b0"/><path d="M1890.5 400.5h6.500l-3.250 5.500z" fill="#b0b0b0"/><path d="M1783.5 421.5h6.500l-3.250 5.500z" fill="#b0b0b0"/><path d="M1890.5 421.5h6.500l-3.250 5.500z" fill="#b0b0b0"/><path d="M1886 370l4 4 4-4" fill="none" stroke="#b8b8b8" stroke-width="1.300"/><g fill="none" stroke="#d0d0d0" stroke-width="1.200"><path d="M1817.500 318l3-5 3 5M1818.500 316.500h4M1816 319.500h9M1817.500 328l3-5 3 5M1818.500 326.500h4M1816 329.500h9M1812 320v8M1810 322l2-2.500 2 2.500M1810 326.500l2 2.500 2-2.500"/></g><rect x="1811.500" y="335" width="18" height="10" fill="#d0d0d0"/><path d="M1812 349.500h16M1814 347.500l-2.500 2 2.500 2M1826 347.500l2.500 2-2.500 2" fill="none" stroke="#d0d0d0" stroke-width="1.200"/><path d="M1812 396h13v3.500h-1.200l-.600-1.800h-3v8l1.600.500v1h-6.600v-1l1.600-.500v-8h-3l-.600 1.800h-1.200z" fill="#d0d0d0"/><path d="M1812 411.500h13M1814 409.500l-2.500 2 2.500 2M1823 409.500l2.500 2-2.500 2" fill="none" stroke="#d0d0d0" stroke-width="1.200"/><rect x="1813.500" y="418.500" width="12" height="10" fill="none" stroke="#d0d0d0" stroke-width="1" stroke-dasharray="1.500 1.500"/><path d="M1811 431.500h5M1828 431.500h-5M1814 429.500l2 2-2 2M1825 429.500l-2 2 2 2" fill="none" stroke="#d0d0d0" stroke-width="1.100"/></svg><span id="t80" class="t " style="left:1813px;top:335px;font-size:10px;line-height:11px;color:#232323;font-weight:bold;">VA</span><span id="t81" class="t " style="left:1816px;top:419px;font-size:8px;line-height:10px;color:#d0d0d0;font-family:"Noto Sans CJK JP","Noto Sans CJK SC",sans-serif;">あ</span><span id="t82" class="t s" style="left:1729px;top:447px;font-size:15px;line-height:18px;color:#c4c4c4;font-weight:bold;">T</span><span id="t83" class="t s" style="left:1755px;top:447px;font-size:15px;line-height:18px;color:#c4c4c4;font-style:italic;">T</span><span id="t84" class="t s" style="left:1782px;top:447px;font-size:15px;line-height:18px;color:#c4c4c4;">TT</span><span id="t85" class="t s" style="left:1808px;top:447px;font-size:15px;line-height:18px;color:#c4c4c4;">T</span><span id="t86" class="t s" style="left:1817px;top:450px;font-size:12px;line-height:15px;color:#c4c4c4;">T</span><span id="t87" class="t s" style="left:1839px;top:447px;font-size:15px;line-height:18px;color:#c4c4c4;">T</span><span id="t88" class="t s" style="left:1848px;top:446px;font-size:8px;line-height:9px;color:#c4c4c4;">1</span><span id="t89" class="t s" style="left:1864px;top:447px;font-size:15px;line-height:18px;color:#c4c4c4;">T</span><span id="t90" class="t s" style="left:1873px;top:455px;font-size:8px;line-height:9px;color:#c4c4c4;">1</span><div style="left:1701px;top:473px;width:203px;height:2px;background:#181818;"></div><div style="left:1701px;top:501px;width:203px;height:2px;background:#181818;"></div><div style="left:1701px;top:532px;width:203px;height:2px;background:#181818;"></div><span id="t91" class="t " style="left:1712px;top:480px;font-size:13px;line-height:17px;color:#a8a8a8;">段落</span><span id="t92" class="t " style="left:1712px;top:510px;font-size:13px;line-height:17px;color:#a8a8a8;">跟踪器</span><div style="left:0px;top:705px;width:1916px;height:333px;background:#232323;"></div><span id="t93" class="t " style="left:27px;top:710px;font-size:13px;line-height:17px;color:#a0a0a0;">渲染队列</span><svg style="left:118px;top:715px;" width="8" height="8" viewBox="0 0 8 8"><path d="M1 1l5.500 5.500M6.500 1l-5.500 5.500" stroke="#a0a0a0" stroke-width="1.200"/></svg><div style="left:134px;top:713px;width:10px;height:10px;background:#c8aa78;"></div><span id="t94" class="t " style="left:155px;top:710px;font-size:13px;line-height:17px;color:#d4d4d4;">C4D默认sRGB</span><svg style="left:241px;top:714px;" width="10" height="10" viewBox="0 0 10 10"><path d="M0 1.500h9M0 5h9M0 8.500h9" stroke="#c8c8c8" stroke-width="1.200"/></svg><div style="left:119px;top:729px;width:132px;height:2px;background:#d4d4d4;"></div><span id="t95" class="t s b" style="left:37px;top:734px;font-size:17px;line-height:20px;color:#2d8ceb;">00000</span><span id="t96" class="t " style="left:10px;top:753px;font-size:10px;line-height:13px;color:#1d4f8c;">0:00:00:00 (25.00 fps)</span><div style="left:125px;top:741px;width:492px;height:18px;background:#141414;border-radius:2px;"></div><svg style="left:130px;top:743px;" width="20" height="14" viewBox="0 0 20 14"><circle cx="7.500" cy="5.200" r="3.600" fill="none" stroke="#b8b8b8" stroke-width="1.300"/><path d="M5 8l-3.500 4" stroke="#b8b8b8" stroke-width="1.500"/><path d="M11.500 9h5l-2.500 3z" fill="#b8b8b8"/></svg><div style="left:0px;top:768px;width:819px;height:20px;background:#333;border-top:1px solid #141414;border-bottom:2px solid #171717;"></div><div style="left:67px;top:772px;width:1px;height:12px;background:#141414;"></div><div style="left:99px;top:772px;width:1px;height:12px;background:#141414;"></div><div style="left:132px;top:772px;width:1px;height:12px;background:#141414;"></div><div style="left:383px;top:772px;width:1px;height:12px;background:#141414;"></div><div style="left:549px;top:772px;width:1px;height:12px;background:#141414;"></div><div style="left:686px;top:772px;width:1px;height:12px;background:#141414;"></div><div style="left:803px;top:772px;width:1px;height:12px;background:#141414;"></div><span id="t97" class="t " style="left:139px;top:770px;font-size:13px;line-height:17px;color:#d0d0d0;">源名称</span><span id="t98" class="t " style="left:106px;top:772px;font-size:10px;line-height:13px;color:#b0b0b0;">#</span><span id="t99" class="t " style="left:390px;top:770px;font-size:13px;line-height:17px;color:#d0d0d0;">模式</span><span id="t100" class="t " style="left:466px;top:772px;font-size:11px;line-height:14px;color:#a8a8a8;">T</span><span id="t101" class="t " style="left:483px;top:771px;font-size:11px;line-height:15px;color:#a8a8a8;">TrkMat</span><span id="t102" class="t " style="left:600px;top:769px;font-size:13px;line-height:17px;color:#c0c0c0;font-style:italic;">fx</span><span id="t103" class="t " style="left:693px;top:770px;font-size:13px;line-height:17px;color:#d0d0d0;">父级</span><div style="left:0px;top:789px;width:819px;height:18px;background:#484848;"></div><div style="left:154px;top:789px;width:229px;height:18px;background:#a8a8a8;"></div><div style="left:5px;top:791px;width:12px;height:13px;background:#3a3a3a;"></div><div style="left:34px;top:791px;width:12px;height:13px;background:#3a3a3a;"></div><div style="left:49px;top:791px;width:12px;height:13px;background:#3a3a3a;"></div><div style="left:85px;top:790px;width:15px;height:15px;background:#aeaedb;"></div><span id="t104" class="t s b" style="left:106px;top:790px;font-size:12px;line-height:16px;color:#b8b8b8;">1</span><span id="t105" class="t m b" style="left:158px;top:792px;font-size:11px;line-height:14px;color:#0c0c0c;">OC伽马0.1_Main_0000.png</span><div style="left:387px;top:790px;width:69px;height:16px;background:#1f1f1f;border-radius:2px;"></div><span id="t106" class="t " style="left:394px;top:789px;font-size:13px;line-height:18px;color:#d8d8d8;">正常</span><div style="left:461px;top:791px;width:13px;height:13px;background:#3a3a3a;"></div><div style="left:629px;top:791px;width:13px;height:13px;background:#3a3a3a;"></div><div style="left:644px;top:791px;width:13px;height:13px;background:#3a3a3a;"></div><div style="left:659px;top:791px;width:13px;height:13px;background:#3a3a3a;"></div><div style="left:710px;top:790px;width:89px;height:16px;background:#1f1f1f;border-radius:2px;"></div><span id="t107" class="t " style="left:717px;top:789px;font-size:13px;line-height:18px;color:#d8d8d8;">无</span><div style="left:0px;top:809px;width:819px;height:18px;background:#2f2f2f;"></div><div style="left:5px;top:811px;width:12px;height:13px;background:#232323;"></div><div style="left:34px;top:811px;width:12px;height:13px;background:#232323;"></div><div style="left:49px;top:811px;width:12px;height:13px;background:#232323;"></div><div style="left:85px;top:810px;width:15px;height:15px;background:#aeaedb;"></div><span id="t108" class="t s b" style="left:106px;top:810px;font-size:12px;line-height:16px;color:#b8b8b8;">2</span><span id="t109" class="t m b" style="left:158px;top:812px;font-size:11px;line-height:14px;color:#b0b0b0;">OC伽马1_Main_0000.png</span><div style="left:387px;top:810px;width:69px;height:16px;background:#1f1f1f;border-radius:2px;"></div><span id="t110" class="t " style="left:394px;top:809px;font-size:13px;line-height:18px;color:#d8d8d8;">正常</span><div style="left:461px;top:811px;width:13px;height:13px;background:#232323;"></div><div style="left:480px;top:810px;width:65px;height:16px;background:#1f1f1f;border-radius:2px;"></div><span id="t111" class="t " style="left:487px;top:809px;font-size:13px;line-height:18px;color:#d8d8d8;">无</span><div style="left:629px;top:811px;width:13px;height:13px;background:#232323;"></div><div style="left:644px;top:811px;width:13px;height:13px;background:#232323;"></div><div style="left:659px;top:811px;width:13px;height:13px;background:#232323;"></div><div style="left:710px;top:810px;width:89px;height:16px;background:#1f1f1f;border-radius:2px;"></div><span id="t112" class="t " style="left:717px;top:809px;font-size:13px;line-height:18px;color:#d8d8d8;">无</span><div style="left:0px;top:829px;width:819px;height:18px;background:#2f2f2f;"></div><div style="left:5px;top:831px;width:12px;height:13px;background:#232323;"></div><div style="left:34px;top:831px;width:12px;height:13px;background:#232323;"></div><div style="left:49px;top:831px;width:12px;height:13px;background:#232323;"></div><div style="left:85px;top:830px;width:15px;height:15px;background:#aeaedb;"></div><span id="t113" class="t s b" style="left:106px;top:830px;font-size:12px;line-height:16px;color:#b8b8b8;">3</span><span id="t114" class="t m b" style="left:158px;top:832px;font-size:11px;line-height:14px;color:#b0b0b0;">C4D默认线性.png</span><div style="left:387px;top:830px;width:69px;height:16px;background:#1f1f1f;border-radius:2px;"></div><span id="t115" class="t " style="left:394px;top:829px;font-size:13px;line-height:18px;color:#d8d8d8;">正常</span><div style="left:461px;top:831px;width:13px;height:13px;background:#232323;"></div><div style="left:480px;top:830px;width:65px;height:16px;background:#1f1f1f;border-radius:2px;"></div><span id="t116" class="t " style="left:487px;top:829px;font-size:13px;line-height:18px;color:#d8d8d8;">无</span><div style="left:629px;top:831px;width:13px;height:13px;background:#232323;"></div><div style="left:644px;top:831px;width:13px;height:13px;background:#232323;"></div><div style="left:659px;top:831px;width:13px;height:13px;background:#232323;"></div><div style="left:710px;top:830px;width:89px;height:16px;background:#1f1f1f;border-radius:2px;"></div><span id="t117" class="t " style="left:717px;top:829px;font-size:13px;line-height:18px;color:#d8d8d8;">无</span><div style="left:0px;top:849px;width:819px;height:18px;background:#2f2f2f;"></div><div style="left:5px;top:851px;width:12px;height:13px;background:#232323;"></div><div style="left:34px;top:851px;width:12px;height:13px;background:#232323;"></div><div style="left:49px;top:851px;width:12px;height:13px;background:#232323;"></div><div style="left:85px;top:850px;width:15px;height:15px;background:#aeaedb;"></div><span id="t118" class="t s b" style="left:106px;top:850px;font-size:12px;line-height:16px;color:#b8b8b8;">4</span><span id="t119" class="t m b" style="left:158px;top:852px;font-size:11px;line-height:14px;color:#b0b0b0;">C4D默认sRGB.png</span><div style="left:387px;top:850px;width:69px;height:16px;background:#1f1f1f;border-radius:2px;"></div><span id="t120" class="t " style="left:394px;top:849px;font-size:13px;line-height:18px;color:#d8d8d8;">正常</span><div style="left:461px;top:851px;width:13px;height:13px;background:#232323;"></div><div style="left:480px;top:850px;width:65px;height:16px;background:#1f1f1f;border-radius:2px;"></div><span id="t121" class="t " style="left:487px;top:849px;font-size:13px;line-height:18px;color:#d8d8d8;">无</span><div style="left:629px;top:851px;width:13px;height:13px;background:#232323;"></div><div style="left:644px;top:851px;width:13px;height:13px;background:#232323;"></div><div style="left:659px;top:851px;width:13px;height:13px;background:#232323;"></div><div style="left:710px;top:850px;width:89px;height:16px;background:#1f1f1f;border-radius:2px;"></div><span id="t122" class="t " style="left:717px;top:849px;font-size:13px;line-height:18px;color:#d8d8d8;">无</span><div style="left:819px;top:739px;width:1px;height:283px;background:#050505;"></div><div style="left:820px;top:768px;width:1072px;height:252px;background:#303030;"></div><div style="left:820px;top:768px;width:8px;height:254px;background:#282828;"></div><div style="left:1892px;top:788px;width:7px;height:79px;background:#3a3a3a;"></div><div style="left:1892px;top:788px;width:7px;height:19px;background:#4a4a4a;"></div><div style="left:1892px;top:867px;width:7px;height:153px;background:#2a2a2a;"></div><div style="left:1899px;top:788px;width:1px;height:19px;background:#111;"></div><div style="left:820px;top:748px;width:1080px;height:20px;background:#222;"></div><div style="left:820px;top:738px;width:1080px;height:1px;background:#0c0c0c;"></div><div style="left:827px;top:739px;width:1066px;height:8px;background:linear-gradient(#565656,#727272);"></div><div style="left:820px;top:739px;width:8px;height:9px;background:#2d8ceb;border-radius:5px 0 0 5px;"></div><div style="left:1892px;top:739px;width:7px;height:9px;background:#2d8ceb;border-radius:0 5px 5px 0;"></div><div style="left:912px;top:763px;width:1px;height:5px;background:#b0b0b0;"></div><span id="t123" class="t " style="left:898px;top:749px;font-size:10px;line-height:12px;color:#b8b8b8;">00010</span><div style="left:998px;top:763px;width:1px;height:5px;background:#b0b0b0;"></div><span id="t124" class="t " style="left:984px;top:749px;font-size:10px;line-height:12px;color:#b8b8b8;">00020</span><div style="left:1083px;top:763px;width:1px;height:5px;background:#b0b0b0;"></div><span id="t125" class="t " style="left:1069px;top:749px;font-size:10px;line-height:12px;color:#b8b8b8;">00030</span><div style="left:1168px;top:763px;width:1px;height:5px;background:#b0b0b0;"></div><span id="t126" class="t " style="left:1154px;top:749px;font-size:10px;line-height:12px;color:#b8b8b8;">00040</span><div style="left:1253px;top:763px;width:1px;height:5px;background:#b0b0b0;"></div><span id="t127" class="t " style="left:1239px;top:749px;font-size:10px;line-height:12px;color:#b8b8b8;">00050</span><div style="left:1338px;top:763px;width:1px;height:5px;background:#b0b0b0;"></div><span id="t128" class="t " style="left:1324px;top:749px;font-size:10px;line-height:12px;color:#b8b8b8;">00060</span><div style="left:1424px;top:763px;width:1px;height:5px;background:#b0b0b0;"></div><span id="t129" class="t " style="left:1410px;top:749px;font-size:10px;line-height:12px;color:#b8b8b8;">00070</span><div style="left:1509px;top:763px;width:1px;height:5px;background:#b0b0b0;"></div><span id="t130" class="t " style="left:1495px;top:749px;font-size:10px;line-height:12px;color:#b8b8b8;">00080</span><div style="left:1594px;top:763px;width:1px;height:5px;background:#b0b0b0;"></div><span id="t131" class="t " style="left:1580px;top:749px;font-size:10px;line-height:12px;color:#b8b8b8;">00090</span><div style="left:1680px;top:763px;width:1px;height:5px;background:#b0b0b0;"></div><span id="t132" class="t " style="left:1666px;top:749px;font-size:10px;line-height:12px;color:#b8b8b8;">00100</span><div style="left:1765px;top:763px;width:1px;height:5px;background:#b0b0b0;"></div><span id="t133" class="t " style="left:1751px;top:749px;font-size:10px;line-height:12px;color:#b8b8b8;">00110</span><div style="left:1850px;top:763px;width:1px;height:5px;background:#b0b0b0;"></div><span id="t134" class="t " style="left:1836px;top:749px;font-size:10px;line-height:12px;color:#b8b8b8;">00120</span><span id="t135" class="t " style="left:820px;top:749px;font-size:10px;line-height:12px;color:#c8b080;">0000</span><div style="left:820px;top:768px;width:1080px;height:1px;background:#141414;"></div><div style="left:827px;top:769px;width:1066px;height:14px;background:#5c5c5c;"></div><div style="left:820px;top:769px;width:7px;height:15px;background:#2d8ceb;border-radius:4px 0 0 4px;"></div><div style="left:1892px;top:769px;width:7px;height:15px;background:#2d8ceb;border-radius:0 4px 4px 0;"></div><div style="left:827px;top:783px;width:1066px;height:5px;background:#24c238;border-bottom:1px solid #1a7a28;"></div><div style="left:828px;top:790px;width:1064px;height:17px;background:linear-gradient(#c9c6e6 0,#a9a6d2 40%,#8b88bd 100%);"></div><div style="left:828px;top:810px;width:1064px;height:17px;background:#787888;"></div><div style="left:828px;top:830px;width:1064px;height:17px;background:#787888;"></div><div style="left:828px;top:850px;width:1064px;height:17px;background:#787888;"></div><div style="left:828px;top:807px;width:1064px;height:2px;background:#2c2c34;"></div><div style="left:828px;top:827px;width:1064px;height:2px;background:#2c2c34;"></div><div style="left:828px;top:847px;width:1064px;height:2px;background:#2c2c34;"></div><div style="left:828px;top:867px;width:1064px;height:2px;background:#2c2c34;"></div><div style="left:826px;top:757px;width:1px;height:265px;background:#1c4c8c;"></div><div style="left:827px;top:757px;width:1px;height:265px;background:#4a95ee;"></div><svg style="left:820px;top:753px;" width="16" height="14" viewBox="0 0 16 14"><path d="M1.500 3.500c0-4 13-4 13 0c0 2.500-4 6-6.500 9.500c-2.500-3.500-6.500-7-6.500-9.500z" fill="#2d8ceb"/><path d="M6.200 6h3.600M8 6v2" stroke="#0c2c54" stroke-width="1"/></svg><svg style="left:1900px;top:768px;" width="16" height="40" viewBox="0 0 16 40"><path d="M3 1.500h11v8l-5.500 6-5.500-6z" fill="#bdbdbd"/><path d="M2 29l7-6v3h6v6h-6v3z" fill="#c8c8c8"/><circle cx="6.500" cy="31" r="2.600" fill="#232323" stroke="#e0e0e0" stroke-width="1.200"/></svg><div style="left:1899px;top:788px;width:17px;height:1px;background:#141414;"></div><div style="left:0px;top:1020px;width:928px;height:2px;background:#0c0c0c;"></div><div style="left:0px;top:1022px;width:1916px;height:16px;background:#232323;"></div><div style="left:2px;top:1023px;width:18px;height:15px;background:#141c30;"></div><div style="left:21px;top:1023px;width:17px;height:15px;background:#141c30;"></div><svg style="left:0px;top:0px;pointer-events:none;" width="1916" height="1038" viewBox="0 0 1916 1038"><path d="M633.500 746.500h8v6.500h3M641.500 746.500h3" fill="none" stroke="#c0c0c0" stroke-width="1.200"/><circle cx="636" cy="746.500" r="1.600" fill="#c0c0c0"/><rect x="644.500" y="744.500" width="4.500" height="3.500" fill="#c0c0c0"/><rect x="644.500" y="751" width="4.500" height="3.500" fill="#c0c0c0"/><path d="M645.500 756h5l-2.500 2.500z" fill="#c0c0c0"/><path d="M675.500 749.500l5-2.500 4 2.500v5l-4.500 2.500-4.500-2.500zM675.500 749.500l4.500 2.500 4.500-2.500M680 752v5" fill="none" stroke="#c0c0c0" stroke-width="1.200"/><path d="M670 743.500v6M667 746.500h6M668 744.500l4 4M672 744.500l-4 4" stroke="#c0c0c0" stroke-width="1"/><path d="M703.500 750.500a5.500 5.500 0 0 1 11 0M709 746v5M706 748h6" fill="none" stroke="#c0c0c0" stroke-width="1.400"/><rect x="701" y="751" width="16" height="4.500" fill="#8c8c8c"/><rect x="708.200" y="751" width="1.600" height="4.500" fill="#c0c0c0"/><rect x="731.500" y="744.500" width="10" height="10" fill="#c0c0c0"/><path d="M729 747v10h10" fill="none" stroke="#c0c0c0" stroke-width="1.200"/><path d="M733 745v9M740 745v9" stroke="#232323" stroke-dasharray="1.500 1.500"/><circle cx="763" cy="748.500" r="4.800" fill="#c0c0c0"/><circle cx="760.500" cy="750.500" r="4.800" fill="#232323"/><circle cx="760.500" cy="750.500" r="4" fill="#888"/><circle cx="758.500" cy="752.500" r="4.600" fill="#232323"/><circle cx="758.500" cy="752.500" r="3.800" fill="#9a9a9a"/><rect x="787.500" y="745.500" width="15" height="11" fill="none" stroke="#c0c0c0" stroke-width="1.300"/><path d="M788.500 748c7 0 6 7 13.500 7" fill="none" stroke="#c0c0c0" stroke-width="1.200"/><path d="M790 743.500v2M794 743.500v2M798 743.500v2" stroke="#c0c0c0"/><path d="M5 778.5c3-5 8-5 11 0c-3 5-8 5-11 0z" fill="#c8c8c8"/><circle cx="10.5" cy="778.5" r="2.300" fill="#232323"/><circle cx="10.5" cy="778.5" r="1" fill="#c8c8c8"/><path d="M20.500 776h3l3.500-3.500v12l-3.500-3.500h-3z" fill="#c0c0c0"/><path d="M28.500 775c2 2 2 5 0 7M30.500 773c3 3 3 8 0 11" fill="none" stroke="#c0c0c0" stroke-width="1.200"/><circle cx="40.500" cy="778.500" r="3.500" fill="#c0c0c0"/><rect x="50.500" y="777.500" width="9.500" height="7" fill="#c0c0c0"/><path d="M52.500 777.500v-2a2.800 2.800 0 0 1 5.600 0v2" fill="none" stroke="#c0c0c0" stroke-width="1.400"/><rect x="54.500" y="779.500" width="1.500" height="2.500" fill="#333"/><path d="M82 772h5.500l6.500 6.500-5 5-7-7z" fill="#c0c0c0"/><circle cx="84.800" cy="774.800" r="1.200" fill="#333"/><g fill="none" stroke="#c0c0c0" stroke-width="1.200"><path d="M555 777h11M556.500 780.500h8M560.500 773v11M557 777c0-4 7-4 7 0"/></g><g stroke="#c0c0c0" stroke-width="1.100"><path d="M575.500 773v10M570.500 778h10M572 774.500l7 7M579 774.500l-7 7"/></g><circle cx="575.500" cy="778" r="1.800" fill="#333" stroke="#c0c0c0"/><path d="M585 773.500l10 10" stroke="#c0c0c0" stroke-width="1.300" stroke-dasharray="2 1"/><rect x="614.500" y="773" width="11" height="10" fill="#c0c0c0"/><path d="M616 774v8M624 774v8" stroke="#2b2b2b" stroke-dasharray="1.500 1.500"/><rect x="618" y="775" width="4" height="6" fill="#333"/><rect x="618.800" y="775.800" width="2.400" height="4.400" fill="#c0c0c0"/><circle cx="637" cy="776.500" r="4.300" fill="#c0c0c0"/><circle cx="634.500" cy="778.500" r="4.300" fill="#333"/><circle cx="634.500" cy="778.500" r="3.500" fill="#909090"/><circle cx="633" cy="780.500" r="4" fill="#333"/><circle cx="633" cy="780.500" r="3.200" fill="#a0a0a0"/><circle cx="650" cy="778.500" r="5" fill="none" stroke="#c0c0c0" stroke-width="1.300"/><path d="M650 773.500a5 5 0 0 1 0 10c2-2 3-7 0-10z" fill="#c0c0c0"/><path d="M646.500 782a5 5 0 0 0 7-7z" fill="#c0c0c0"/><path d="M660 776l5.500-3 5.500 3v6l-5.500 3-5.500-3zM660 776l5.500 3 5.500-3M665.500 779v6" fill="none" stroke="#c0c0c0" stroke-width="1.200"/><path d="M5 797.5c3-5 8-5 11 0c-3 5-8 5-11 0z" fill="#e0e0e0"/><circle cx="10.5" cy="797.5" r="2.300" fill="#232323"/><circle cx="10.5" cy="797.5" r="1" fill="#e0e0e0"/><path d="M73 794l6.500 3.800-6.500 3.800z" fill="#b0b0b0"/><path d="M138.5 790h8l3 3v12h-11z" fill="#f4f4f4"/><path d="M146.5 790v3h3z" fill="#b8b8b8"/><rect x="140.0" y="794.5" width="8" height="8" fill="#1e6fc8"/><path d="M140.0 802.5l3-4 2 2.500 1.500-1.500 1.500 3z" fill="#0c3f86"/><path d="M443 795.5l4 4 4-4" fill="none" stroke="#b8b8b8" stroke-width="1.300"/><g fill="none" stroke="#d0d0d0" stroke-width="1.200"><path d="M555 797h11M556.500 800.5h8M560.500 793v10M557 797c0-4 7-4 7 0"/><path d="M585 803l10.500-10.500" stroke-width="1.400"/></g><path d="M697 798a1.500 1.500 0 1 1 1.500 1.500a3 3 0 1 1 3-3a4.500 4.500 0 1 1 -4.500-4.500" fill="none" stroke="#b0b0b0" stroke-width="1.200"/><path d="M786 795.5l4 4 4-4" fill="none" stroke="#b8b8b8" stroke-width="1.300"/><path d="M5 817.5c3-5 8-5 11 0c-3 5-8 5-11 0z" fill="#e0e0e0"/><circle cx="10.5" cy="817.5" r="2.300" fill="#232323"/><circle cx="10.5" cy="817.5" r="1" fill="#e0e0e0"/><path d="M73 814l6.500 3.800-6.500 3.800z" fill="#b0b0b0"/><path d="M138.5 810h8l3 3v12h-11z" fill="#f4f4f4"/><path d="M146.5 810v3h3z" fill="#b8b8b8"/><rect x="140.0" y="814.5" width="8" height="8" fill="#1e6fc8"/><path d="M140.0 822.5l3-4 2 2.500 1.500-1.500 1.500 3z" fill="#0c3f86"/><path d="M443 815.5l4 4 4-4" fill="none" stroke="#b8b8b8" stroke-width="1.300"/><path d="M532 815.5l4 4 4-4" fill="none" stroke="#b8b8b8" stroke-width="1.300"/><g fill="none" stroke="#d0d0d0" stroke-width="1.200"><path d="M555 817h11M556.500 820.5h8M560.500 813v10M557 817c0-4 7-4 7 0"/><path d="M585 823l10.500-10.500" stroke-width="1.400"/></g><path d="M697 818a1.500 1.500 0 1 1 1.500 1.500a3 3 0 1 1 3-3a4.500 4.500 0 1 1 -4.500-4.500" fill="none" stroke="#b0b0b0" stroke-width="1.200"/><path d="M786 815.5l4 4 4-4" fill="none" stroke="#b8b8b8" stroke-width="1.300"/><path d="M73 834l6.500 3.800-6.500 3.800z" fill="#b0b0b0"/><path d="M138.5 830h8l3 3v12h-11z" fill="#f4f4f4"/><path d="M146.5 830v3h3z" fill="#b8b8b8"/><rect x="140.0" y="834.5" width="8" height="8" fill="#1e6fc8"/><path d="M140.0 842.5l3-4 2 2.500 1.500-1.500 1.500 3z" fill="#0c3f86"/><path d="M443 835.5l4 4 4-4" fill="none" stroke="#b8b8b8" stroke-width="1.300"/><path d="M532 835.5l4 4 4-4" fill="none" stroke="#b8b8b8" stroke-width="1.300"/><g fill="none" stroke="#d0d0d0" stroke-width="1.200"><path d="M555 837h11M556.500 840.5h8M560.500 833v10M557 837c0-4 7-4 7 0"/><path d="M585 843l10.500-10.500" stroke-width="1.400"/></g><path d="M697 838a1.500 1.500 0 1 1 1.500 1.500a3 3 0 1 1 3-3a4.500 4.500 0 1 1 -4.500-4.500" fill="none" stroke="#b0b0b0" stroke-width="1.200"/><path d="M786 835.5l4 4 4-4" fill="none" stroke="#b8b8b8" stroke-width="1.300"/><path d="M5 857.5c3-5 8-5 11 0c-3 5-8 5-11 0z" fill="#e0e0e0"/><circle cx="10.5" cy="857.5" r="2.300" fill="#232323"/><circle cx="10.5" cy="857.5" r="1" fill="#e0e0e0"/><path d="M73 854l6.500 3.800-6.500 3.800z" fill="#b0b0b0"/><path d="M138.5 850h8l3 3v12h-11z" fill="#f4f4f4"/><path d="M146.5 850v3h3z" fill="#b8b8b8"/><rect x="140.0" y="854.5" width="8" height="8" fill="#1e6fc8"/><path d="M140.0 862.5l3-4 2 2.500 1.500-1.500 1.500 3z" fill="#0c3f86"/><path d="M443 855.5l4 4 4-4" fill="none" stroke="#b8b8b8" stroke-width="1.300"/><path d="M532 855.5l4 4 4-4" fill="none" stroke="#b8b8b8" stroke-width="1.300"/><g fill="none" stroke="#d0d0d0" stroke-width="1.200"><path d="M555 857h11M556.500 860.5h8M560.500 853v10M557 857c0-4 7-4 7 0"/><path d="M585 863l10.500-10.500" stroke-width="1.400"/></g><path d="M697 858a1.500 1.500 0 1 1 1.500 1.500a3 3 0 1 1 3-3a4.500 4.500 0 1 1 -4.500-4.500" fill="none" stroke="#b0b0b0" stroke-width="1.200"/><path d="M786 855.5l4 4 4-4" fill="none" stroke="#b8b8b8" stroke-width="1.300"/><g fill="none" stroke="#3d8ae6" stroke-width="1.200"><path d="M6.500 1025.500h7v7h-7zM9 1028h7v7h-7zM11.500 1030.500h6v5h-6z"/><circle cx="28.500" cy="1028.500" r="4"/><path d="M29.500 1029.500h6.500v6.500h-6.500z"/></g><path d="M45 1024h6v2l2.500 4-2.500 4v2h-6v-2l-2.500-4 2.500-4z" fill="#b8b8b8"/><path d="M825.500 1031l3-3 1.500 1.500 2-2 3 3.500zM905.500 1033l5-5 1.500 1.500-3 3.500zM910 1033l7-7 6.500 7z" fill="#c8c8c8"/></svg><div style="left:855px;top:1029px;width:39px;height:2px;background:#3a3a3a;"></div><div style="left:846px;top:1025px;width:10px;height:10px;background:#232323;border:2px solid #c0c0c0;border-radius:5px;"></div><div style="left:1187px;top:234px;width:545px;height:507px;background:#fff;box-shadow:0 0 2px rgba(0,0,0,.5);"></div><div style="left:1187px;top:234px;width:545px;height:32px;background:#cacaca;"></div><span id="t136" class="t " style="left:1198px;top:243px;font-size:12px;line-height:16px;color:#101010;">照片 - OC伽马0.1_Main_0000.png</span><svg style="left:1600px;top:234px;" width="130" height="32" viewBox="0 0 130 32"><g stroke="#111" stroke-width="1.100" fill="none"><path d="M12 16.500h11"/><path d="M58.500 11.500h9.500v9.500h-9.500z"/><path d="M103.500 11l10.500 10.500M114 11l-10.500 10.500"/></g></svg><div style="left:1187px;top:266px;width:68px;height:48px;background:#0078d7;"></div><svg style="left:0px;top:0px;pointer-events:none;" width="1916" height="1038" viewBox="0 0 1916 1038"><rect x="1214" y="283" width="14.500" height="14" fill="#fff"/><path d="M1215.500 294.500l4.500-6 7 7.500M1222 290l2-2 3 3.200" fill="none" stroke="#0078d7" stroke-width="1.200"/><rect x="1223" y="285" width="2.500" height="2.500" fill="#0078d7"/><path d="M1281 290.500h16M1289 282.500v16" stroke="#1a1a1a" stroke-width="1.300"/><circle cx="1358" cy="288.500" r="5.200" fill="none" stroke="#1a1a1a" stroke-width="1.300"/><path d="M1362 292.500l6 6M1355.500 288.500h5M1358 286v5" stroke="#1a1a1a" stroke-width="1.300"/><path d="M1403 285.500h13M1407 285v-2h5v2M1404.500 286l.8 11.500h8.400l.8-11.500M1407.500 288v7.500M1409.500 288v7.500M1411.500 288v7.500" fill="none" stroke="#1a1a1a" stroke-width="1.200"/><path d="M1460 296.500c-3.800-3.200-7.500-6-7.500-9.500a3.750 3.750 0 0 1 7.500-1.300a3.750 3.750 0 0 1 7.500 1.300c0 3.500-3.700 6.300-7.500 9.500z" fill="none" stroke="#a8a8a8" stroke-width="1.100"/><path d="M1502.500 291.500a7.500 7.500 0 1 1 12.500 4.500" fill="none" stroke="#1a1a1a" stroke-width="1.300"/><path d="M1516.500 293v4.500h-4.500" fill="none" stroke="#1a1a1a" stroke-width="1.300"/><circle cx="1510" cy="290" r="1.600" fill="none" stroke="#1a1a1a" stroke-width="1.100"/><path d="M1552 286.500h13v13M1555.500 282.500v13.500h13.500M1566.500 284.500l-10 10" fill="none" stroke="#1a1a1a" stroke-width="1.300"/><g fill="none" stroke="#1a1a1a" stroke-width="1.150"><path d="M1635.500 284.500l2.500-1.500 10.500 11 1 4-4-1-10.500-11zM1645 296.500l3-3"/><path d="M1647.500 283.500l2 2-11 11.500-4 .500 1-3.500zM1636 294l2.500 2.500"/><circle cx="1636.800" cy="285.300" r="1.700"/></g><path d="M1660 286l4 4 4-4" fill="none" stroke="#0a64c0" stroke-width="1.600"/><circle cx="1702" cy="291" r="1.200" fill="#1a1a1a"/><circle cx="1708" cy="291" r="1.200" fill="#1a1a1a"/><circle cx="1714" cy="291" r="1.200" fill="#1a1a1a"/><path d="M1700 725l16-16M1700 719.500v5.500h5.500M1710.500 709h5.500v5.500" fill="none" stroke="#1a1a1a" stroke-width="1.400"/></svg><svg style="left:1219px;top:376px;" width="481" height="271" viewBox="0 0 640 360"><defs>
<radialGradient id="phbg" cx="0.55" cy="0.5" r="0.75"><stop offset="0" stop-color="#05ec5c"/><stop offset="0.6" stop-color="#04e858"/><stop offset="1" stop-color="#03e055"/></radialGradient>
<radialGradient id="phsh"><stop offset="0" stop-color="#02a038" stop-opacity="0.95"/><stop offset="0.55" stop-color="#02a038" stop-opacity="0.7"/><stop offset="1" stop-color="#02a038" stop-opacity="0"/></radialGradient>
<radialGradient id="phgl"><stop offset="0" stop-color="#30ff80" stop-opacity="0.95"/><stop offset="1" stop-color="#30ff80" stop-opacity="0"/></radialGradient>
<radialGradient id="phca"><stop offset="0" stop-color="#30ff80" stop-opacity="1"/><stop offset="0.55" stop-color="#30ff80" stop-opacity="0.85"/><stop offset="1" stop-color="#30ff80" stop-opacity="0"/></radialGradient>
<radialGradient id="phred" cx="0.72" cy="0.26" r="0.95"><stop offset="0" stop-color="#f82020"/><stop offset="0.6" stop-color="#e01818"/><stop offset="1" stop-color="#900c0c"/></radialGradient>
<linearGradient id="phchb" x1="0.2" y1="0" x2="0.5" y2="1"><stop offset="0.5" stop-color="#28f470"/><stop offset="0.8" stop-color="#12dc5c"/><stop offset="1" stop-color="#0ab84a"/></linearGradient>
<radialGradient id="phcht" cx="0.5" cy="0.42" r="0.6"><stop offset="0" stop-color="#0c0c10"/><stop offset="0.28" stop-color="#55555f"/><stop offset="0.55" stop-color="#6c6c78"/><stop offset="1" stop-color="#84848e"/></radialGradient>
<radialGradient id="phgls" cx="0.5" cy="0.45" r="0.52"><stop offset="0" stop-color="#c0f8d0" stop-opacity="0.18"/><stop offset="0.8" stop-color="#c0f8d0" stop-opacity="0.28"/><stop offset="1" stop-color="#78c898" stop-opacity="0.75"/></radialGradient>
<clipPath id="phcc"><circle cx="315" cy="176.500" r="45.500"/></clipPath>
<clipPath id="phgc"><circle cx="460" cy="141.500" r="43"/></clipPath>
</defs>
<rect width="640" height="360" fill="url(#phbg)"/>
<ellipse cx="364" cy="232" rx="72" ry="46" fill="url(#phgl)" transform="rotate(-25 364 232)"/>
<ellipse cx="136" cy="273" rx="74" ry="42" fill="url(#phsh)" transform="rotate(-25 136 273)"/>
<ellipse cx="277" cy="235" rx="66" ry="40" fill="url(#phsh)" transform="rotate(-22 277 235)"/>
<ellipse cx="430" cy="198" rx="62" ry="36" fill="url(#phsh)" transform="rotate(-18 430 198)"/>
<ellipse cx="426" cy="196" rx="25" ry="14" fill="url(#phca)" transform="rotate(-14 426 196)"/>
<circle cx="172" cy="210" r="51" fill="url(#phred)"/>
<circle cx="315" cy="176.500" r="45.500" fill="url(#phchb)"/>
<g clip-path="url(#phcc)">
<ellipse cx="314.500" cy="162.500" rx="38.500" ry="31" fill="url(#phcht)" transform="rotate(-4 314.500 162.500)"/>
<ellipse cx="282" cy="184" rx="6.300" ry="10" fill="#f82020" transform="rotate(-14 282 184)"/>
<circle cx="330.500" cy="170.500" r="10.600" fill="#fff"/>
<ellipse cx="331" cy="151" rx="6.500" ry="4.300" fill="#fff" transform="rotate(25 331 151)"/>
<path d="M356 156c4.500 10 4.500 24 0 34" fill="none" stroke="#fff" stroke-opacity="0.5" stroke-width="2.500"/>
</g>
<circle cx="460" cy="141.500" r="43" fill="url(#phgls)" stroke="#78c898" stroke-opacity="0.5" stroke-width="1.500"/>
<g clip-path="url(#phgc)"><ellipse cx="462" cy="186" rx="34" ry="7" fill="#02a038" fill-opacity="0.6"/><ellipse cx="452" cy="112" rx="30" ry="14" fill="#fff" fill-opacity="0.1"/></g>
<ellipse cx="477.500" cy="116.500" rx="5.500" ry="3.200" fill="#fff" fill-opacity="0.8" transform="rotate(30 477.500 116.500)"/>
</svg>
</div></body></html>
